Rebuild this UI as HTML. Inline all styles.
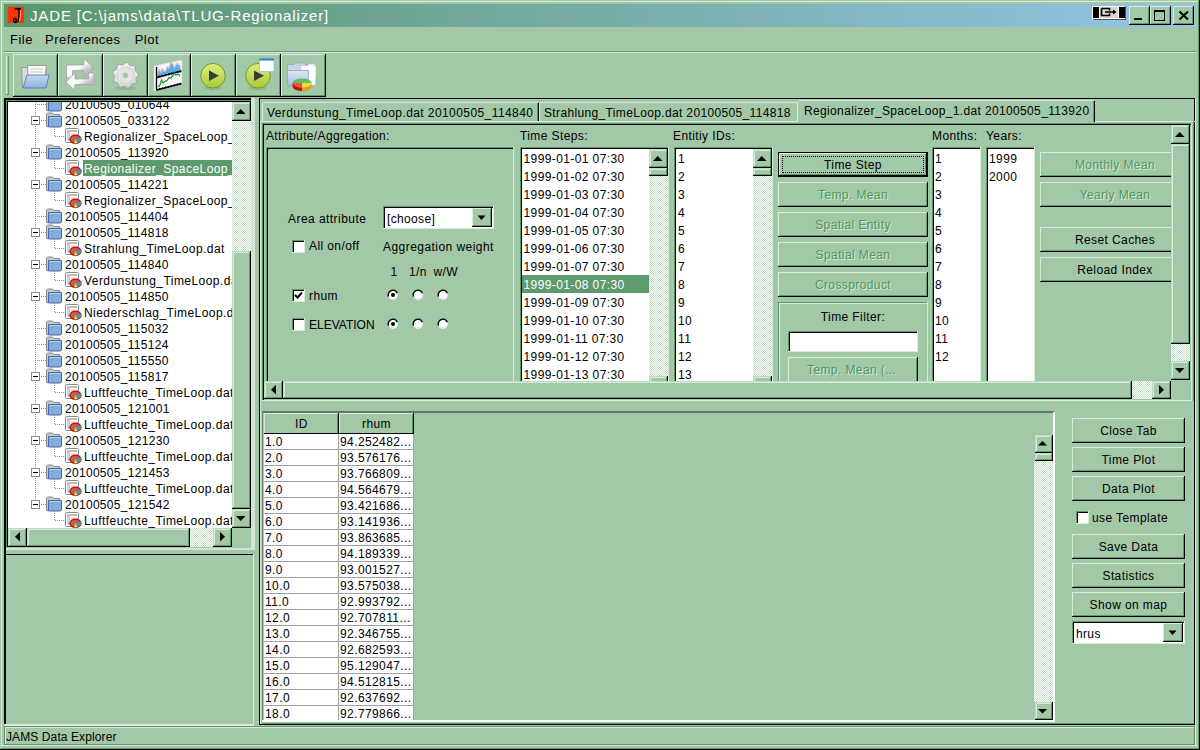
<!DOCTYPE html>
<html><head><meta charset="utf-8">
<style>
*{box-sizing:border-box;margin:0;padding:0}
html,body{width:1200px;height:750px;overflow:hidden;background:#a3c8a7}
body{position:relative;font-family:"Liberation Sans",sans-serif;font-size:12px;color:#000}
.a{position:absolute}
.t{position:absolute;white-space:nowrap}
svg{position:absolute;overflow:visible}
</style></head><body>
<div class="a" style="left:1px;top:1px;width:1197px;height:1px;background:#d6edd8;"></div>
<div class="a" style="left:1px;top:1px;width:1px;height:746px;background:#d6edd8;"></div>
<div class="a" style="left:1px;top:745px;width:1197px;height:1px;background:#d6edd8;"></div>
<div class="a" style="left:1199px;top:0px;width:1px;height:750px;background:#000;"></div>
<div class="a" style="left:0px;top:749px;width:1200px;height:1px;background:#000;"></div>
<div class="a" style="left:1198px;top:1px;width:1px;height:748px;background:#5e9a6e;"></div>
<div class="a" style="left:1px;top:748px;width:1198px;height:1px;background:#5e9a6e;"></div>
<div class="a" style="left:1px;top:1px;width:1197px;height:1px;background:#d6edd8;"></div>
<div class="a" style="left:4px;top:4px;width:1192px;height:23px;background:linear-gradient(90deg,#5a966a 0%,#94c4e6 100%);"></div>
<div class="a" style="left:8px;top:7px;width:16px;height:16px;background:#ff3300;"></div>
<svg style="left:8px;top:7px" width="16" height="16"><path d="M6.5 1.8h6.5" stroke="#000" stroke-width="1.8"/><path d="M11 2C11.2 7 11.3 11.5 10 14 C9 15.8 6.5 15.8 5.6 14.2 C4.8 12.6 6 11 7.6 11.6 C8.8 12.2 8.4 14 7.2 13.8" stroke="#000" stroke-width="1.5" fill="none"/><path d="M12.3 3C12.5 8 12.3 12 11.3 14.5" stroke="#ffd0c0" stroke-width="0.8" fill="none"/></svg>
<div class="t" style="left:30px;top:7.80px;font-size:15px;letter-spacing:0.85px;color:#fff;line-height:16px;">JADE [C:\jams\data\TLUG-Regionalizer]</div>
<div class="a" style="left:1092px;top:6px;width:34px;height:14px;background:#fff;"></div>
<div class="a" style="left:1093px;top:7px;width:6px;height:11px;background:#000;"></div>
<div class="a" style="left:1119px;top:7px;width:6px;height:11px;background:#000;"></div>
<div class="a" style="left:1100px;top:7px;width:18px;height:11px;background:#d8d4d0;"></div>
<div class="a" style="left:1093px;top:19px;width:33px;height:1px;background:#5a5050;"></div>
<div class="a" style="left:1125px;top:6px;width:1px;height:14px;background:#5a5050;"></div>
<svg style="left:1100px;top:7px" width="18" height="11"><path d="M1.5 1.5h8v2M1.5 1.5v7h8v-2M5 5h9" stroke="#000" stroke-width="1.6" fill="none"/><path d="M13 2.5l3.5 2.5-3.5 2.5z" fill="#000"/></svg>
<div class="a" style="left:1129px;top:6px;width:21px;height:19px;background:#a3c8a7;"></div>
<div class="a" style="left:1129px;top:6px;width:21px;height:1px;background:#d6edd8;"></div>
<div class="a" style="left:1129px;top:6px;width:1px;height:19px;background:#d6edd8;"></div>
<div class="a" style="left:1129px;top:24px;width:21px;height:1px;background:#000;"></div>
<div class="a" style="left:1149px;top:6px;width:1px;height:19px;background:#000;"></div>
<div class="a" style="left:1130px;top:23px;width:19px;height:1px;background:#5e9a6e;"></div>
<div class="a" style="left:1148px;top:7px;width:1px;height:17px;background:#5e9a6e;"></div>
<div class="a" style="left:1150px;top:6px;width:21px;height:19px;background:#a3c8a7;"></div>
<div class="a" style="left:1150px;top:6px;width:21px;height:1px;background:#d6edd8;"></div>
<div class="a" style="left:1150px;top:6px;width:1px;height:19px;background:#d6edd8;"></div>
<div class="a" style="left:1150px;top:24px;width:21px;height:1px;background:#000;"></div>
<div class="a" style="left:1170px;top:6px;width:1px;height:19px;background:#000;"></div>
<div class="a" style="left:1151px;top:23px;width:19px;height:1px;background:#5e9a6e;"></div>
<div class="a" style="left:1169px;top:7px;width:1px;height:17px;background:#5e9a6e;"></div>
<div class="a" style="left:1173px;top:6px;width:21px;height:19px;background:#a3c8a7;"></div>
<div class="a" style="left:1173px;top:6px;width:21px;height:1px;background:#d6edd8;"></div>
<div class="a" style="left:1173px;top:6px;width:1px;height:19px;background:#d6edd8;"></div>
<div class="a" style="left:1173px;top:24px;width:21px;height:1px;background:#000;"></div>
<div class="a" style="left:1193px;top:6px;width:1px;height:19px;background:#000;"></div>
<div class="a" style="left:1174px;top:23px;width:19px;height:1px;background:#5e9a6e;"></div>
<div class="a" style="left:1192px;top:7px;width:1px;height:17px;background:#5e9a6e;"></div>
<div class="a" style="left:1134px;top:18px;width:8px;height:2px;background:#000;"></div>
<div class="a" style="left:1154px;top:10px;width:11px;height:11px;border:1px solid #000;border-top-width:2px"></div>
<svg style="left:1178px;top:10px" width="12" height="11"><path d="M1.5 1.5l8.5 8M10 1.5l-8.5 8" stroke="#000" stroke-width="2" fill="none"/></svg>
<div class="t" style="left:10px;top:31.50px;font-size:13px;letter-spacing:0.5px;color:#000;line-height:16px;">File</div>
<div class="t" style="left:45px;top:31.50px;font-size:13px;letter-spacing:0.5px;color:#000;line-height:16px;">Preferences</div>
<div class="t" style="left:134.7px;top:31.50px;font-size:13px;letter-spacing:0.5px;color:#000;line-height:16px;">Plot</div>
<div class="a" style="left:4px;top:51px;width:1192px;height:1px;background:#5e9a6e;"></div>
<div class="a" style="left:4px;top:52px;width:1192px;height:1px;background:#d6edd8;"></div>
<div class="a" style="left:6px;top:56px;width:1px;height:39px;background:#d6edd8;"></div>
<div class="a" style="left:8px;top:56px;width:1px;height:39px;background:#5e9a6e;"></div>
<div class="a" style="left:6px;top:94px;width:3px;height:1px;background:#5e9a6e;"></div>
<div class="a" style="left:13px;top:54px;width:45px;height:43px;background:#a3c8a7;"></div>
<div class="a" style="left:13px;top:54px;width:45px;height:1px;background:#d6edd8;"></div>
<div class="a" style="left:13px;top:54px;width:1px;height:42px;background:#d6edd8;"></div>
<div class="a" style="left:13px;top:96px;width:45px;height:1px;background:#000;"></div>
<div class="a" style="left:57px;top:54px;width:1px;height:43px;background:#000;"></div>
<div class="a" style="left:14px;top:95px;width:43px;height:1px;background:#5e9a6e;"></div>
<div class="a" style="left:56px;top:55px;width:1px;height:41px;background:#5e9a6e;"></div>
<div class="a" style="left:58px;top:54px;width:45px;height:43px;background:#a3c8a7;"></div>
<div class="a" style="left:58px;top:54px;width:45px;height:1px;background:#d6edd8;"></div>
<div class="a" style="left:58px;top:54px;width:1px;height:42px;background:#d6edd8;"></div>
<div class="a" style="left:58px;top:96px;width:45px;height:1px;background:#000;"></div>
<div class="a" style="left:102px;top:54px;width:1px;height:43px;background:#000;"></div>
<div class="a" style="left:59px;top:95px;width:43px;height:1px;background:#5e9a6e;"></div>
<div class="a" style="left:101px;top:55px;width:1px;height:41px;background:#5e9a6e;"></div>
<div class="a" style="left:103px;top:54px;width:45px;height:43px;background:#a3c8a7;"></div>
<div class="a" style="left:103px;top:54px;width:45px;height:1px;background:#d6edd8;"></div>
<div class="a" style="left:103px;top:54px;width:1px;height:42px;background:#d6edd8;"></div>
<div class="a" style="left:103px;top:96px;width:45px;height:1px;background:#000;"></div>
<div class="a" style="left:147px;top:54px;width:1px;height:43px;background:#000;"></div>
<div class="a" style="left:104px;top:95px;width:43px;height:1px;background:#5e9a6e;"></div>
<div class="a" style="left:146px;top:55px;width:1px;height:41px;background:#5e9a6e;"></div>
<div class="a" style="left:148px;top:54px;width:43px;height:43px;background:#a3c8a7;"></div>
<div class="a" style="left:148px;top:54px;width:43px;height:1px;background:#d6edd8;"></div>
<div class="a" style="left:148px;top:54px;width:1px;height:42px;background:#d6edd8;"></div>
<div class="a" style="left:148px;top:96px;width:43px;height:1px;background:#000;"></div>
<div class="a" style="left:190px;top:54px;width:1px;height:43px;background:#000;"></div>
<div class="a" style="left:149px;top:95px;width:41px;height:1px;background:#5e9a6e;"></div>
<div class="a" style="left:189px;top:55px;width:1px;height:41px;background:#5e9a6e;"></div>
<div class="a" style="left:191px;top:54px;width:45px;height:43px;background:#a3c8a7;"></div>
<div class="a" style="left:191px;top:54px;width:45px;height:1px;background:#d6edd8;"></div>
<div class="a" style="left:191px;top:54px;width:1px;height:42px;background:#d6edd8;"></div>
<div class="a" style="left:191px;top:96px;width:45px;height:1px;background:#000;"></div>
<div class="a" style="left:235px;top:54px;width:1px;height:43px;background:#000;"></div>
<div class="a" style="left:192px;top:95px;width:43px;height:1px;background:#5e9a6e;"></div>
<div class="a" style="left:234px;top:55px;width:1px;height:41px;background:#5e9a6e;"></div>
<div class="a" style="left:236px;top:54px;width:45px;height:43px;background:#a3c8a7;"></div>
<div class="a" style="left:236px;top:54px;width:45px;height:1px;background:#d6edd8;"></div>
<div class="a" style="left:236px;top:54px;width:1px;height:42px;background:#d6edd8;"></div>
<div class="a" style="left:236px;top:96px;width:45px;height:1px;background:#000;"></div>
<div class="a" style="left:280px;top:54px;width:1px;height:43px;background:#000;"></div>
<div class="a" style="left:237px;top:95px;width:43px;height:1px;background:#5e9a6e;"></div>
<div class="a" style="left:279px;top:55px;width:1px;height:41px;background:#5e9a6e;"></div>
<div class="a" style="left:281px;top:54px;width:45px;height:43px;background:#a3c8a7;"></div>
<div class="a" style="left:281px;top:54px;width:45px;height:1px;background:#d6edd8;"></div>
<div class="a" style="left:281px;top:54px;width:1px;height:42px;background:#d6edd8;"></div>
<div class="a" style="left:281px;top:96px;width:45px;height:1px;background:#000;"></div>
<div class="a" style="left:325px;top:54px;width:1px;height:43px;background:#000;"></div>
<div class="a" style="left:282px;top:95px;width:43px;height:1px;background:#5e9a6e;"></div>
<div class="a" style="left:324px;top:55px;width:1px;height:41px;background:#5e9a6e;"></div>
<svg style="left:0;top:0" width="1" height="1"><defs>
<linearGradient id="gBlue" x1="0" y1="0" x2="0" y2="1"><stop offset="0" stop-color="#c6daf0"/><stop offset="1" stop-color="#8fb2dc"/></linearGradient>
<linearGradient id="gGray" x1="0" y1="0" x2="1" y2="1"><stop offset="0" stop-color="#f4f4f4"/><stop offset="0.5" stop-color="#bdbdbd"/><stop offset="1" stop-color="#e6e6e6"/></linearGradient>
<radialGradient id="gGear" cx="0.45" cy="0.35" r="0.7"><stop offset="0" stop-color="#fcfcfc"/><stop offset="0.7" stop-color="#e2e2e2"/><stop offset="1" stop-color="#c8c8c8"/></radialGradient>
<linearGradient id="gPlay" x1="0" y1="0" x2="0" y2="1"><stop offset="0" stop-color="#e0ec78"/><stop offset="1" stop-color="#a8cc3c"/></linearGradient>
<linearGradient id="gFold2" x1="0" y1="0" x2="0" y2="1"><stop offset="0" stop-color="#dfe8f4"/><stop offset="1" stop-color="#a9bfdc"/></linearGradient>
</defs></svg>
<svg style="left:13px;top:54px" width="45" height="43">
<path d="M8.5 13.5h6l1 -1h0v20l-6 1z" fill="#d8d8d8" stroke="#9a9a9a" stroke-width="1"/>
<path d="M14.5 11.5h19l-1.5 10h-17z" fill="#fafafa" stroke="#9a9a9a" stroke-width="1"/>
<path d="M17 15h13M17 18h13" stroke="#c8c8c8" stroke-width="1"/>
<path d="M14 21h22l-3 13h-23z" fill="url(#gBlue)" stroke="#5c86c0" stroke-width="1"/>
</svg>
<svg style="left:58px;top:54px" width="45" height="43">
<defs><linearGradient id="gMet" x1="0" y1="0" x2="1" y2="1"><stop offset="0" stop-color="#f0f0f0"/><stop offset="0.45" stop-color="#fdfdfd"/><stop offset="0.7" stop-color="#bcbcbc"/><stop offset="1" stop-color="#e0e0e0"/></linearGradient></defs>
<path d="M8.5 24V11H26V5L36 14 26 23V16.5H14.5V24Z" fill="url(#gMet)" stroke="#a0a0a0" stroke-width="0.7"/>
<path d="M36 19V30.5H17V37L8 28 17 19V25H30.5V19Z" fill="url(#gMet)" stroke="#a0a0a0" stroke-width="0.7"/>
</svg>
<svg style="left:103px;top:54px" width="45" height="43">
<ellipse cx="22.5" cy="34" rx="11" ry="2" fill="#7da886" opacity="0.6"/>
<polygon points="22.50,8.40 24.76,8.60 26.26,11.06 28.00,11.87 30.86,11.44 32.46,13.04 32.03,15.90 32.84,17.64 35.30,19.14 35.50,21.40 33.33,23.31 32.84,25.16 33.76,27.90 32.46,29.76 29.57,29.83 28.00,30.93 26.95,33.62 24.76,34.20 22.50,32.40 20.59,32.23 18.05,33.62 16.00,32.66 15.43,29.83 14.07,28.47 11.24,27.90 10.28,25.85 11.67,23.31 11.50,21.40 9.70,19.14 10.28,16.95 12.97,15.90 14.07,14.33 14.14,11.44 16.00,10.14 18.74,11.06 20.59,10.57" fill="url(#gGear)" stroke="#9c9c9c" stroke-width="0.8" stroke-linejoin="round"/>
<circle cx="22.5" cy="21.4" r="8.5" fill="#e4e4e4" stroke="#c8c8c8" stroke-width="0.8"/>
<circle cx="22.5" cy="21.4" r="2.6" fill="#a3c8a7"/>
</svg>
<svg style="left:148px;top:54px" width="43" height="43">
<path d="M6 12l28-6v24l-28 7z" fill="#f6f6f6" stroke="#d8d8d8" stroke-width="0.6"/>
<path d="M9 22l2-6 2 3 1.5-4 1.5 3 2-1 1.5-4 1.5 2 2-6 2 2 1.5 4 2-5 2.5 1 1.5 4v3l-23 5z" fill="#5aaee6"/>
<path d="M9 21l2-6 2 3 1.5-4 1.5 3 2-1 1.5-4 1.5 2 2-6 2 2 1.5 4 2-5 2.5 1 1.5 4" fill="none" stroke="#f4a0a0" stroke-width="0.8"/>
<path d="M8.5 13v23M8.5 36l25-6.5M8.5 23.5l25-6.5" stroke="#000" stroke-width="1.3" fill="none"/>
<path d="M8.5 36l25-6.5M8.5 23.5l25-6.5" stroke="#000" stroke-width="2.2" stroke-dasharray="1 2" fill="none"/>
<path d="M10.5 33l1.5-2 1.5-5 1.5 3 2-1.5 2-1 2-3 2 0.5 1.5-2 2-3 1.5 2 2-1 2 2" fill="none" stroke="#1c9c3c" stroke-width="1.3"/>
</svg>
<svg style="left:191px;top:54px" width="45" height="43">
<ellipse cx="22" cy="34" rx="9" ry="2" fill="#7da886" opacity="0.6"/>
<circle cx="22" cy="21.75" r="12.3" fill="url(#gPlay)" stroke="#6aa01c" stroke-width="1"/>
<path d="M18 16.5l10 5.25-10 5.25z" fill="#3a3a3a"/></svg>
<svg style="left:236px;top:54px" width="45" height="43">
<ellipse cx="22" cy="34" rx="9" ry="2" fill="#7da886" opacity="0.6"/>
<circle cx="22" cy="21.75" r="12.3" fill="url(#gPlay)" stroke="#6aa01c" stroke-width="1"/>
<path d="M18 16.5l10 5.25-10 5.25z" fill="#3a3a3a"/><rect x="23.5" y="5" width="14.5" height="12.5" fill="#fff" stroke="#a9c4e0" stroke-width="1"/><rect x="23.5" y="4.5" width="14.5" height="2" fill="#2a7cd0"/></svg>
<svg style="left:281px;top:54px" width="45" height="43">
<path d="M6.5 31v-19l1-1.5h6l1.5-1.5h8l1 1.5h8.5l-1 20.5z" fill="#c9d6e8" stroke="#8ea4c4" stroke-width="0.8"/>
<path d="M19.5 11.5h7l1-1.5h6l1 2v18l-15 1z" fill="#f2f4f8" stroke="#b0bed2" stroke-width="0.6"/>
<path d="M27 13h8l-1 18h-8z" fill="#ffffff"/>
<path d="M6.5 16.5h21v15h-21z" fill="url(#gFold2)" stroke="#8ea4c4" stroke-width="0.8"/>
<ellipse cx="22" cy="36" rx="6" ry="1.5" fill="#7da886" opacity="0.5"/>
<path d="M11.5 29v3.5a9.5 4.5 0 0 0 9.5 4.5v-3.5z" fill="#c81010"/>
<path d="M21 33.5v3.5a9.5 4.5 0 0 0 9.5-4.5v-3.5z" fill="#e0a010"/>
<path d="M11.5 29a9.5 4.5 0 0 1 19 0z" fill="#58c058"/>
<path d="M11.5 29a9.5 4.5 0 0 0 9.5 4.5v-4.5z" fill="#f05050"/>
<path d="M21 33.5a9.5 4.5 0 0 0 9.5-4.5h-9.5z" fill="#f4d840"/>
</svg>
<div class="a" style="left:4px;top:98px;width:250px;height:2px;background:#000;"></div>
<div class="a" style="left:4px;top:98px;width:2px;height:450px;background:#000;"></div>
<div class="a" style="left:6px;top:100px;width:246px;height:1px;background:#5e9a6e;"></div>
<div class="a" style="left:6px;top:100px;width:1px;height:448px;background:#5e9a6e;"></div>
<div class="a" style="left:7px;top:101px;width:244px;height:1px;background:#000;"></div>
<div class="a" style="left:7px;top:101px;width:1px;height:446px;background:#000;"></div>
<div class="a" style="left:251px;top:98px;width:4px;height:451px;background:#d2e4d6;"></div>
<div class="a" style="left:6px;top:548px;width:249px;height:2px;background:#d2e4d6;"></div>
<div class="a" style="left:4px;top:98px;width:2px;height:627px;background:#000;"></div>
<div class="a" style="left:8px;top:102px;width:224px;height:426px;background:#fff;"></div>
<div class="a" style="left:232px;top:102px;width:19px;height:426px;background:repeating-conic-gradient(#ffffff 0% 25%, #c4dec8 0% 50%) 0 0/2px 2px;"></div>
<div class="a" style="left:232px;top:102px;width:19px;height:19px;background:#a3c8a7;"></div>
<div class="a" style="left:232px;top:102px;width:19px;height:1px;background:#bcd9c0;"></div>
<div class="a" style="left:232px;top:102px;width:1px;height:19px;background:#bcd9c0;"></div>
<div class="a" style="left:233px;top:103px;width:16px;height:1px;background:#d6edd8;"></div>
<div class="a" style="left:233px;top:103px;width:1px;height:16px;background:#d6edd8;"></div>
<div class="a" style="left:232px;top:120px;width:19px;height:1px;background:#000;"></div>
<div class="a" style="left:250px;top:102px;width:1px;height:19px;background:#000;"></div>
<div class="a" style="left:233px;top:119px;width:17px;height:1px;background:#5e9a6e;"></div>
<div class="a" style="left:249px;top:103px;width:1px;height:17px;background:#5e9a6e;"></div>
<svg style="left:232px;top:102px" width="19" height="19"><path d="M4 12h9.5l-4.75-5z" fill="#000"/></svg>
<div class="a" style="left:232px;top:509px;width:19px;height:19px;background:#a3c8a7;"></div>
<div class="a" style="left:232px;top:509px;width:19px;height:1px;background:#bcd9c0;"></div>
<div class="a" style="left:232px;top:509px;width:1px;height:19px;background:#bcd9c0;"></div>
<div class="a" style="left:233px;top:510px;width:16px;height:1px;background:#d6edd8;"></div>
<div class="a" style="left:233px;top:510px;width:1px;height:16px;background:#d6edd8;"></div>
<div class="a" style="left:232px;top:527px;width:19px;height:1px;background:#000;"></div>
<div class="a" style="left:250px;top:509px;width:1px;height:19px;background:#000;"></div>
<div class="a" style="left:233px;top:526px;width:17px;height:1px;background:#5e9a6e;"></div>
<div class="a" style="left:249px;top:510px;width:1px;height:17px;background:#5e9a6e;"></div>
<svg style="left:232px;top:509px" width="19" height="19"><path d="M4 7h9.5l-4.75 5z" fill="#000"/></svg>
<div class="a" style="left:232px;top:251px;width:19px;height:258px;background:#a3c8a7;"></div>
<div class="a" style="left:232px;top:251px;width:19px;height:1px;background:#bcd9c0;"></div>
<div class="a" style="left:232px;top:251px;width:1px;height:258px;background:#bcd9c0;"></div>
<div class="a" style="left:233px;top:252px;width:16px;height:1px;background:#d6edd8;"></div>
<div class="a" style="left:233px;top:252px;width:1px;height:255px;background:#d6edd8;"></div>
<div class="a" style="left:232px;top:508px;width:19px;height:1px;background:#000;"></div>
<div class="a" style="left:250px;top:251px;width:1px;height:258px;background:#000;"></div>
<div class="a" style="left:233px;top:507px;width:17px;height:1px;background:#5e9a6e;"></div>
<div class="a" style="left:249px;top:252px;width:1px;height:256px;background:#5e9a6e;"></div>
<div class="a" style="left:8px;top:528px;width:224px;height:19px;background:repeating-conic-gradient(#ffffff 0% 25%, #c4dec8 0% 50%) 0 0/2px 2px;"></div>
<div class="a" style="left:8px;top:528px;width:19px;height:19px;background:#a3c8a7;"></div>
<div class="a" style="left:8px;top:528px;width:19px;height:1px;background:#bcd9c0;"></div>
<div class="a" style="left:8px;top:528px;width:1px;height:19px;background:#bcd9c0;"></div>
<div class="a" style="left:9px;top:529px;width:16px;height:1px;background:#d6edd8;"></div>
<div class="a" style="left:9px;top:529px;width:1px;height:16px;background:#d6edd8;"></div>
<div class="a" style="left:8px;top:546px;width:19px;height:1px;background:#000;"></div>
<div class="a" style="left:26px;top:528px;width:1px;height:19px;background:#000;"></div>
<div class="a" style="left:9px;top:545px;width:17px;height:1px;background:#5e9a6e;"></div>
<div class="a" style="left:25px;top:529px;width:1px;height:17px;background:#5e9a6e;"></div>
<svg style="left:8px;top:528px" width="19" height="19"><path d="M12 4v9.5l-5-4.75z" fill="#000"/></svg>
<div class="a" style="left:213px;top:528px;width:19px;height:19px;background:#a3c8a7;"></div>
<div class="a" style="left:213px;top:528px;width:19px;height:1px;background:#bcd9c0;"></div>
<div class="a" style="left:213px;top:528px;width:1px;height:19px;background:#bcd9c0;"></div>
<div class="a" style="left:214px;top:529px;width:16px;height:1px;background:#d6edd8;"></div>
<div class="a" style="left:214px;top:529px;width:1px;height:16px;background:#d6edd8;"></div>
<div class="a" style="left:213px;top:546px;width:19px;height:1px;background:#000;"></div>
<div class="a" style="left:231px;top:528px;width:1px;height:19px;background:#000;"></div>
<div class="a" style="left:214px;top:545px;width:17px;height:1px;background:#5e9a6e;"></div>
<div class="a" style="left:230px;top:529px;width:1px;height:17px;background:#5e9a6e;"></div>
<svg style="left:213px;top:528px" width="19" height="19"><path d="M7 4v9.5l5-4.75z" fill="#000"/></svg>
<div class="a" style="left:27px;top:528px;width:163px;height:19px;background:#a3c8a7;"></div>
<div class="a" style="left:27px;top:528px;width:163px;height:1px;background:#bcd9c0;"></div>
<div class="a" style="left:27px;top:528px;width:1px;height:19px;background:#bcd9c0;"></div>
<div class="a" style="left:28px;top:529px;width:160px;height:1px;background:#d6edd8;"></div>
<div class="a" style="left:28px;top:529px;width:1px;height:16px;background:#d6edd8;"></div>
<div class="a" style="left:27px;top:546px;width:163px;height:1px;background:#000;"></div>
<div class="a" style="left:189px;top:528px;width:1px;height:19px;background:#000;"></div>
<div class="a" style="left:28px;top:545px;width:161px;height:1px;background:#5e9a6e;"></div>
<div class="a" style="left:188px;top:529px;width:1px;height:17px;background:#5e9a6e;"></div>
<div class="a" style="left:232px;top:528px;width:19px;height:19px;background:#a3c8a7;"></div>
<div class="a" style="left:8px;top:102px;width:224px;height:426px;overflow:hidden"><div class="a" style="left:-8px;top:-102px;width:240px;height:700px"><div class="a" style="left:35px;top:96px;width:1px;height:408px;background:repeating-linear-gradient(180deg,#909090 0 1px,transparent 1px 2px)"></div>
<div class="a" style="left:37px;top:104px;width:9px;height:1px;background:repeating-linear-gradient(90deg,#909090 0 1px,transparent 1px 2px)"></div>
<svg style="left:46px;top:96px" width="17" height="16"><path d="M0.5 14.5v-12.5l1-1h5l1.5 1.5h5.5v12z" fill="#c8c8c8" stroke="#8a8a8a" stroke-width="1"/><path d="M2.5 4.5h13v9.5l-1 1h-12z" fill="#86acdc" stroke="#3c6cb4" stroke-width="1"/><path d="M3.5 5.5h11" stroke="#b8d0f0" stroke-width="1"/></svg>
<div class="t" style="left:65px;top:97px;font-size:12px;letter-spacing:0.3px;line-height:16px">20100505_010644</div>
<div class="a" style="left:31px;top:116px;width:9px;height:9px;background:#fff;border:1px solid #8a8a8a"></div>
<div class="a" style="left:33px;top:120px;width:5px;height:1px;background:#000"></div>
<div class="a" style="left:41px;top:120px;width:5px;height:1px;background:repeating-linear-gradient(90deg,#909090 0 1px,transparent 1px 2px)"></div>
<svg style="left:46px;top:112px" width="17" height="16"><path d="M0.5 14.5v-12.5l1-1h5l1.5 1.5h5.5v12z" fill="#c8c8c8" stroke="#8a8a8a" stroke-width="1"/><path d="M2.5 4.5h13v9.5l-1 1h-12z" fill="#86acdc" stroke="#3c6cb4" stroke-width="1"/><path d="M3.5 5.5h11" stroke="#b8d0f0" stroke-width="1"/></svg>
<div class="t" style="left:65px;top:113px;font-size:12px;letter-spacing:0.3px;line-height:16px">20100505_033122</div>
<div class="a" style="left:54px;top:127px;width:1px;height:9px;background:repeating-linear-gradient(180deg,#909090 0 1px,transparent 1px 2px)"></div>
<div class="a" style="left:55px;top:136px;width:10px;height:1px;background:repeating-linear-gradient(90deg,#909090 0 1px,transparent 1px 2px)"></div>
<svg style="left:65px;top:128px" width="18" height="17"><rect x="0.5" y="0.5" width="13" height="14" rx="1" fill="#fafafa" stroke="#8c8c8c"/><rect x="2" y="2" width="10" height="2" fill="#c0c0c0"/><rect x="2" y="4" width="3" height="9" fill="#cfcfcf"/><path d="M2 6.5h10M2 9h10M8.5 4v8" stroke="#d4dde4" stroke-width="1"/><ellipse cx="10.5" cy="11.3" rx="5.6" ry="4.1" fill="#d0583c" stroke="#c00c0c" stroke-width="1.2"/><path d="M10.5 11.3L15.6 9.6A5.6 4.1 0 0 1 12.6 15Z" fill="#2a9cd0"/><path d="M10.5 11.3L12.6 15A5.6 4.1 0 0 1 9 15.3Z" fill="#d8e060"/></svg>
<div class="t" style="left:84px;top:129px;font-size:12px;letter-spacing:0.45px;line-height:16px;color:#000">Regionalizer_SpaceLoop_</div>
<div class="a" style="left:31px;top:148px;width:9px;height:9px;background:#fff;border:1px solid #8a8a8a"></div>
<div class="a" style="left:33px;top:152px;width:5px;height:1px;background:#000"></div>
<div class="a" style="left:41px;top:152px;width:5px;height:1px;background:repeating-linear-gradient(90deg,#909090 0 1px,transparent 1px 2px)"></div>
<svg style="left:46px;top:144px" width="17" height="16"><path d="M0.5 14.5v-12.5l1-1h5l1.5 1.5h5.5v12z" fill="#c8c8c8" stroke="#8a8a8a" stroke-width="1"/><path d="M2.5 4.5h13v9.5l-1 1h-12z" fill="#86acdc" stroke="#3c6cb4" stroke-width="1"/><path d="M3.5 5.5h11" stroke="#b8d0f0" stroke-width="1"/></svg>
<div class="t" style="left:65px;top:145px;font-size:12px;letter-spacing:0.3px;line-height:16px">20100505_113920</div>
<div class="a" style="left:54px;top:159px;width:1px;height:9px;background:repeating-linear-gradient(180deg,#909090 0 1px,transparent 1px 2px)"></div>
<div class="a" style="left:55px;top:168px;width:10px;height:1px;background:repeating-linear-gradient(90deg,#909090 0 1px,transparent 1px 2px)"></div>
<svg style="left:65px;top:160px" width="18" height="17"><rect x="0.5" y="0.5" width="13" height="14" rx="1" fill="#fafafa" stroke="#8c8c8c"/><rect x="2" y="2" width="10" height="2" fill="#c0c0c0"/><rect x="2" y="4" width="3" height="9" fill="#cfcfcf"/><path d="M2 6.5h10M2 9h10M8.5 4v8" stroke="#d4dde4" stroke-width="1"/><ellipse cx="10.5" cy="11.3" rx="5.6" ry="4.1" fill="#d0583c" stroke="#c00c0c" stroke-width="1.2"/><path d="M10.5 11.3L15.6 9.6A5.6 4.1 0 0 1 12.6 15Z" fill="#2a9cd0"/><path d="M10.5 11.3L12.6 15A5.6 4.1 0 0 1 9 15.3Z" fill="#d8e060"/></svg>
<div class="a" style="left:83px;top:160px;width:149px;height:16px;background:#5e9a6e"></div>
<div class="t" style="left:84px;top:161px;font-size:12px;letter-spacing:0.45px;line-height:16px;color:#fff">Regionalizer_SpaceLoop_</div>
<div class="a" style="left:31px;top:180px;width:9px;height:9px;background:#fff;border:1px solid #8a8a8a"></div>
<div class="a" style="left:33px;top:184px;width:5px;height:1px;background:#000"></div>
<div class="a" style="left:41px;top:184px;width:5px;height:1px;background:repeating-linear-gradient(90deg,#909090 0 1px,transparent 1px 2px)"></div>
<svg style="left:46px;top:176px" width="17" height="16"><path d="M0.5 14.5v-12.5l1-1h5l1.5 1.5h5.5v12z" fill="#c8c8c8" stroke="#8a8a8a" stroke-width="1"/><path d="M2.5 4.5h13v9.5l-1 1h-12z" fill="#86acdc" stroke="#3c6cb4" stroke-width="1"/><path d="M3.5 5.5h11" stroke="#b8d0f0" stroke-width="1"/></svg>
<div class="t" style="left:65px;top:177px;font-size:12px;letter-spacing:0.3px;line-height:16px">20100505_114221</div>
<div class="a" style="left:54px;top:191px;width:1px;height:9px;background:repeating-linear-gradient(180deg,#909090 0 1px,transparent 1px 2px)"></div>
<div class="a" style="left:55px;top:200px;width:10px;height:1px;background:repeating-linear-gradient(90deg,#909090 0 1px,transparent 1px 2px)"></div>
<svg style="left:65px;top:192px" width="18" height="17"><rect x="0.5" y="0.5" width="13" height="14" rx="1" fill="#fafafa" stroke="#8c8c8c"/><rect x="2" y="2" width="10" height="2" fill="#c0c0c0"/><rect x="2" y="4" width="3" height="9" fill="#cfcfcf"/><path d="M2 6.5h10M2 9h10M8.5 4v8" stroke="#d4dde4" stroke-width="1"/><ellipse cx="10.5" cy="11.3" rx="5.6" ry="4.1" fill="#d0583c" stroke="#c00c0c" stroke-width="1.2"/><path d="M10.5 11.3L15.6 9.6A5.6 4.1 0 0 1 12.6 15Z" fill="#2a9cd0"/><path d="M10.5 11.3L12.6 15A5.6 4.1 0 0 1 9 15.3Z" fill="#d8e060"/></svg>
<div class="t" style="left:84px;top:193px;font-size:12px;letter-spacing:0.45px;line-height:16px;color:#000">Regionalizer_SpaceLoop_</div>
<div class="a" style="left:37px;top:216px;width:9px;height:1px;background:repeating-linear-gradient(90deg,#909090 0 1px,transparent 1px 2px)"></div>
<svg style="left:46px;top:208px" width="17" height="16"><path d="M0.5 14.5v-12.5l1-1h5l1.5 1.5h5.5v12z" fill="#c8c8c8" stroke="#8a8a8a" stroke-width="1"/><path d="M2.5 4.5h13v9.5l-1 1h-12z" fill="#86acdc" stroke="#3c6cb4" stroke-width="1"/><path d="M3.5 5.5h11" stroke="#b8d0f0" stroke-width="1"/></svg>
<div class="t" style="left:65px;top:209px;font-size:12px;letter-spacing:0.3px;line-height:16px">20100505_114404</div>
<div class="a" style="left:31px;top:228px;width:9px;height:9px;background:#fff;border:1px solid #8a8a8a"></div>
<div class="a" style="left:33px;top:232px;width:5px;height:1px;background:#000"></div>
<div class="a" style="left:41px;top:232px;width:5px;height:1px;background:repeating-linear-gradient(90deg,#909090 0 1px,transparent 1px 2px)"></div>
<svg style="left:46px;top:224px" width="17" height="16"><path d="M0.5 14.5v-12.5l1-1h5l1.5 1.5h5.5v12z" fill="#c8c8c8" stroke="#8a8a8a" stroke-width="1"/><path d="M2.5 4.5h13v9.5l-1 1h-12z" fill="#86acdc" stroke="#3c6cb4" stroke-width="1"/><path d="M3.5 5.5h11" stroke="#b8d0f0" stroke-width="1"/></svg>
<div class="t" style="left:65px;top:225px;font-size:12px;letter-spacing:0.3px;line-height:16px">20100505_114818</div>
<div class="a" style="left:54px;top:239px;width:1px;height:9px;background:repeating-linear-gradient(180deg,#909090 0 1px,transparent 1px 2px)"></div>
<div class="a" style="left:55px;top:248px;width:10px;height:1px;background:repeating-linear-gradient(90deg,#909090 0 1px,transparent 1px 2px)"></div>
<svg style="left:65px;top:240px" width="18" height="17"><rect x="0.5" y="0.5" width="13" height="14" rx="1" fill="#fafafa" stroke="#8c8c8c"/><rect x="2" y="2" width="10" height="2" fill="#c0c0c0"/><rect x="2" y="4" width="3" height="9" fill="#cfcfcf"/><path d="M2 6.5h10M2 9h10M8.5 4v8" stroke="#d4dde4" stroke-width="1"/><ellipse cx="10.5" cy="11.3" rx="5.6" ry="4.1" fill="#d0583c" stroke="#c00c0c" stroke-width="1.2"/><path d="M10.5 11.3L15.6 9.6A5.6 4.1 0 0 1 12.6 15Z" fill="#2a9cd0"/><path d="M10.5 11.3L12.6 15A5.6 4.1 0 0 1 9 15.3Z" fill="#d8e060"/></svg>
<div class="t" style="left:84px;top:241px;font-size:12px;letter-spacing:0.45px;line-height:16px;color:#000">Strahlung_TimeLoop.dat</div>
<div class="a" style="left:31px;top:260px;width:9px;height:9px;background:#fff;border:1px solid #8a8a8a"></div>
<div class="a" style="left:33px;top:264px;width:5px;height:1px;background:#000"></div>
<div class="a" style="left:41px;top:264px;width:5px;height:1px;background:repeating-linear-gradient(90deg,#909090 0 1px,transparent 1px 2px)"></div>
<svg style="left:46px;top:256px" width="17" height="16"><path d="M0.5 14.5v-12.5l1-1h5l1.5 1.5h5.5v12z" fill="#c8c8c8" stroke="#8a8a8a" stroke-width="1"/><path d="M2.5 4.5h13v9.5l-1 1h-12z" fill="#86acdc" stroke="#3c6cb4" stroke-width="1"/><path d="M3.5 5.5h11" stroke="#b8d0f0" stroke-width="1"/></svg>
<div class="t" style="left:65px;top:257px;font-size:12px;letter-spacing:0.3px;line-height:16px">20100505_114840</div>
<div class="a" style="left:54px;top:271px;width:1px;height:9px;background:repeating-linear-gradient(180deg,#909090 0 1px,transparent 1px 2px)"></div>
<div class="a" style="left:55px;top:280px;width:10px;height:1px;background:repeating-linear-gradient(90deg,#909090 0 1px,transparent 1px 2px)"></div>
<svg style="left:65px;top:272px" width="18" height="17"><rect x="0.5" y="0.5" width="13" height="14" rx="1" fill="#fafafa" stroke="#8c8c8c"/><rect x="2" y="2" width="10" height="2" fill="#c0c0c0"/><rect x="2" y="4" width="3" height="9" fill="#cfcfcf"/><path d="M2 6.5h10M2 9h10M8.5 4v8" stroke="#d4dde4" stroke-width="1"/><ellipse cx="10.5" cy="11.3" rx="5.6" ry="4.1" fill="#d0583c" stroke="#c00c0c" stroke-width="1.2"/><path d="M10.5 11.3L15.6 9.6A5.6 4.1 0 0 1 12.6 15Z" fill="#2a9cd0"/><path d="M10.5 11.3L12.6 15A5.6 4.1 0 0 1 9 15.3Z" fill="#d8e060"/></svg>
<div class="t" style="left:84px;top:273px;font-size:12px;letter-spacing:0.45px;line-height:16px;color:#000">Verdunstung_TimeLoop.dat</div>
<div class="a" style="left:31px;top:292px;width:9px;height:9px;background:#fff;border:1px solid #8a8a8a"></div>
<div class="a" style="left:33px;top:296px;width:5px;height:1px;background:#000"></div>
<div class="a" style="left:41px;top:296px;width:5px;height:1px;background:repeating-linear-gradient(90deg,#909090 0 1px,transparent 1px 2px)"></div>
<svg style="left:46px;top:288px" width="17" height="16"><path d="M0.5 14.5v-12.5l1-1h5l1.5 1.5h5.5v12z" fill="#c8c8c8" stroke="#8a8a8a" stroke-width="1"/><path d="M2.5 4.5h13v9.5l-1 1h-12z" fill="#86acdc" stroke="#3c6cb4" stroke-width="1"/><path d="M3.5 5.5h11" stroke="#b8d0f0" stroke-width="1"/></svg>
<div class="t" style="left:65px;top:289px;font-size:12px;letter-spacing:0.3px;line-height:16px">20100505_114850</div>
<div class="a" style="left:54px;top:303px;width:1px;height:9px;background:repeating-linear-gradient(180deg,#909090 0 1px,transparent 1px 2px)"></div>
<div class="a" style="left:55px;top:312px;width:10px;height:1px;background:repeating-linear-gradient(90deg,#909090 0 1px,transparent 1px 2px)"></div>
<svg style="left:65px;top:304px" width="18" height="17"><rect x="0.5" y="0.5" width="13" height="14" rx="1" fill="#fafafa" stroke="#8c8c8c"/><rect x="2" y="2" width="10" height="2" fill="#c0c0c0"/><rect x="2" y="4" width="3" height="9" fill="#cfcfcf"/><path d="M2 6.5h10M2 9h10M8.5 4v8" stroke="#d4dde4" stroke-width="1"/><ellipse cx="10.5" cy="11.3" rx="5.6" ry="4.1" fill="#d0583c" stroke="#c00c0c" stroke-width="1.2"/><path d="M10.5 11.3L15.6 9.6A5.6 4.1 0 0 1 12.6 15Z" fill="#2a9cd0"/><path d="M10.5 11.3L12.6 15A5.6 4.1 0 0 1 9 15.3Z" fill="#d8e060"/></svg>
<div class="t" style="left:84px;top:305px;font-size:12px;letter-spacing:0.45px;line-height:16px;color:#000">Niederschlag_TimeLoop.dat</div>
<div class="a" style="left:37px;top:328px;width:9px;height:1px;background:repeating-linear-gradient(90deg,#909090 0 1px,transparent 1px 2px)"></div>
<svg style="left:46px;top:320px" width="17" height="16"><path d="M0.5 14.5v-12.5l1-1h5l1.5 1.5h5.5v12z" fill="#c8c8c8" stroke="#8a8a8a" stroke-width="1"/><path d="M2.5 4.5h13v9.5l-1 1h-12z" fill="#86acdc" stroke="#3c6cb4" stroke-width="1"/><path d="M3.5 5.5h11" stroke="#b8d0f0" stroke-width="1"/></svg>
<div class="t" style="left:65px;top:321px;font-size:12px;letter-spacing:0.3px;line-height:16px">20100505_115032</div>
<div class="a" style="left:37px;top:344px;width:9px;height:1px;background:repeating-linear-gradient(90deg,#909090 0 1px,transparent 1px 2px)"></div>
<svg style="left:46px;top:336px" width="17" height="16"><path d="M0.5 14.5v-12.5l1-1h5l1.5 1.5h5.5v12z" fill="#c8c8c8" stroke="#8a8a8a" stroke-width="1"/><path d="M2.5 4.5h13v9.5l-1 1h-12z" fill="#86acdc" stroke="#3c6cb4" stroke-width="1"/><path d="M3.5 5.5h11" stroke="#b8d0f0" stroke-width="1"/></svg>
<div class="t" style="left:65px;top:337px;font-size:12px;letter-spacing:0.3px;line-height:16px">20100505_115124</div>
<div class="a" style="left:37px;top:360px;width:9px;height:1px;background:repeating-linear-gradient(90deg,#909090 0 1px,transparent 1px 2px)"></div>
<svg style="left:46px;top:352px" width="17" height="16"><path d="M0.5 14.5v-12.5l1-1h5l1.5 1.5h5.5v12z" fill="#c8c8c8" stroke="#8a8a8a" stroke-width="1"/><path d="M2.5 4.5h13v9.5l-1 1h-12z" fill="#86acdc" stroke="#3c6cb4" stroke-width="1"/><path d="M3.5 5.5h11" stroke="#b8d0f0" stroke-width="1"/></svg>
<div class="t" style="left:65px;top:353px;font-size:12px;letter-spacing:0.3px;line-height:16px">20100505_115550</div>
<div class="a" style="left:31px;top:372px;width:9px;height:9px;background:#fff;border:1px solid #8a8a8a"></div>
<div class="a" style="left:33px;top:376px;width:5px;height:1px;background:#000"></div>
<div class="a" style="left:41px;top:376px;width:5px;height:1px;background:repeating-linear-gradient(90deg,#909090 0 1px,transparent 1px 2px)"></div>
<svg style="left:46px;top:368px" width="17" height="16"><path d="M0.5 14.5v-12.5l1-1h5l1.5 1.5h5.5v12z" fill="#c8c8c8" stroke="#8a8a8a" stroke-width="1"/><path d="M2.5 4.5h13v9.5l-1 1h-12z" fill="#86acdc" stroke="#3c6cb4" stroke-width="1"/><path d="M3.5 5.5h11" stroke="#b8d0f0" stroke-width="1"/></svg>
<div class="t" style="left:65px;top:369px;font-size:12px;letter-spacing:0.3px;line-height:16px">20100505_115817</div>
<div class="a" style="left:54px;top:383px;width:1px;height:9px;background:repeating-linear-gradient(180deg,#909090 0 1px,transparent 1px 2px)"></div>
<div class="a" style="left:55px;top:392px;width:10px;height:1px;background:repeating-linear-gradient(90deg,#909090 0 1px,transparent 1px 2px)"></div>
<svg style="left:65px;top:384px" width="18" height="17"><rect x="0.5" y="0.5" width="13" height="14" rx="1" fill="#fafafa" stroke="#8c8c8c"/><rect x="2" y="2" width="10" height="2" fill="#c0c0c0"/><rect x="2" y="4" width="3" height="9" fill="#cfcfcf"/><path d="M2 6.5h10M2 9h10M8.5 4v8" stroke="#d4dde4" stroke-width="1"/><ellipse cx="10.5" cy="11.3" rx="5.6" ry="4.1" fill="#d0583c" stroke="#c00c0c" stroke-width="1.2"/><path d="M10.5 11.3L15.6 9.6A5.6 4.1 0 0 1 12.6 15Z" fill="#2a9cd0"/><path d="M10.5 11.3L12.6 15A5.6 4.1 0 0 1 9 15.3Z" fill="#d8e060"/></svg>
<div class="t" style="left:84px;top:385px;font-size:12px;letter-spacing:0.45px;line-height:16px;color:#000">Luftfeuchte_TimeLoop.dat</div>
<div class="a" style="left:31px;top:404px;width:9px;height:9px;background:#fff;border:1px solid #8a8a8a"></div>
<div class="a" style="left:33px;top:408px;width:5px;height:1px;background:#000"></div>
<div class="a" style="left:41px;top:408px;width:5px;height:1px;background:repeating-linear-gradient(90deg,#909090 0 1px,transparent 1px 2px)"></div>
<svg style="left:46px;top:400px" width="17" height="16"><path d="M0.5 14.5v-12.5l1-1h5l1.5 1.5h5.5v12z" fill="#c8c8c8" stroke="#8a8a8a" stroke-width="1"/><path d="M2.5 4.5h13v9.5l-1 1h-12z" fill="#86acdc" stroke="#3c6cb4" stroke-width="1"/><path d="M3.5 5.5h11" stroke="#b8d0f0" stroke-width="1"/></svg>
<div class="t" style="left:65px;top:401px;font-size:12px;letter-spacing:0.3px;line-height:16px">20100505_121001</div>
<div class="a" style="left:54px;top:415px;width:1px;height:9px;background:repeating-linear-gradient(180deg,#909090 0 1px,transparent 1px 2px)"></div>
<div class="a" style="left:55px;top:424px;width:10px;height:1px;background:repeating-linear-gradient(90deg,#909090 0 1px,transparent 1px 2px)"></div>
<svg style="left:65px;top:416px" width="18" height="17"><rect x="0.5" y="0.5" width="13" height="14" rx="1" fill="#fafafa" stroke="#8c8c8c"/><rect x="2" y="2" width="10" height="2" fill="#c0c0c0"/><rect x="2" y="4" width="3" height="9" fill="#cfcfcf"/><path d="M2 6.5h10M2 9h10M8.5 4v8" stroke="#d4dde4" stroke-width="1"/><ellipse cx="10.5" cy="11.3" rx="5.6" ry="4.1" fill="#d0583c" stroke="#c00c0c" stroke-width="1.2"/><path d="M10.5 11.3L15.6 9.6A5.6 4.1 0 0 1 12.6 15Z" fill="#2a9cd0"/><path d="M10.5 11.3L12.6 15A5.6 4.1 0 0 1 9 15.3Z" fill="#d8e060"/></svg>
<div class="t" style="left:84px;top:417px;font-size:12px;letter-spacing:0.45px;line-height:16px;color:#000">Luftfeuchte_TimeLoop.dat</div>
<div class="a" style="left:31px;top:436px;width:9px;height:9px;background:#fff;border:1px solid #8a8a8a"></div>
<div class="a" style="left:33px;top:440px;width:5px;height:1px;background:#000"></div>
<div class="a" style="left:41px;top:440px;width:5px;height:1px;background:repeating-linear-gradient(90deg,#909090 0 1px,transparent 1px 2px)"></div>
<svg style="left:46px;top:432px" width="17" height="16"><path d="M0.5 14.5v-12.5l1-1h5l1.5 1.5h5.5v12z" fill="#c8c8c8" stroke="#8a8a8a" stroke-width="1"/><path d="M2.5 4.5h13v9.5l-1 1h-12z" fill="#86acdc" stroke="#3c6cb4" stroke-width="1"/><path d="M3.5 5.5h11" stroke="#b8d0f0" stroke-width="1"/></svg>
<div class="t" style="left:65px;top:433px;font-size:12px;letter-spacing:0.3px;line-height:16px">20100505_121230</div>
<div class="a" style="left:54px;top:447px;width:1px;height:9px;background:repeating-linear-gradient(180deg,#909090 0 1px,transparent 1px 2px)"></div>
<div class="a" style="left:55px;top:456px;width:10px;height:1px;background:repeating-linear-gradient(90deg,#909090 0 1px,transparent 1px 2px)"></div>
<svg style="left:65px;top:448px" width="18" height="17"><rect x="0.5" y="0.5" width="13" height="14" rx="1" fill="#fafafa" stroke="#8c8c8c"/><rect x="2" y="2" width="10" height="2" fill="#c0c0c0"/><rect x="2" y="4" width="3" height="9" fill="#cfcfcf"/><path d="M2 6.5h10M2 9h10M8.5 4v8" stroke="#d4dde4" stroke-width="1"/><ellipse cx="10.5" cy="11.3" rx="5.6" ry="4.1" fill="#d0583c" stroke="#c00c0c" stroke-width="1.2"/><path d="M10.5 11.3L15.6 9.6A5.6 4.1 0 0 1 12.6 15Z" fill="#2a9cd0"/><path d="M10.5 11.3L12.6 15A5.6 4.1 0 0 1 9 15.3Z" fill="#d8e060"/></svg>
<div class="t" style="left:84px;top:449px;font-size:12px;letter-spacing:0.45px;line-height:16px;color:#000">Luftfeuchte_TimeLoop.dat</div>
<div class="a" style="left:31px;top:468px;width:9px;height:9px;background:#fff;border:1px solid #8a8a8a"></div>
<div class="a" style="left:33px;top:472px;width:5px;height:1px;background:#000"></div>
<div class="a" style="left:41px;top:472px;width:5px;height:1px;background:repeating-linear-gradient(90deg,#909090 0 1px,transparent 1px 2px)"></div>
<svg style="left:46px;top:464px" width="17" height="16"><path d="M0.5 14.5v-12.5l1-1h5l1.5 1.5h5.5v12z" fill="#c8c8c8" stroke="#8a8a8a" stroke-width="1"/><path d="M2.5 4.5h13v9.5l-1 1h-12z" fill="#86acdc" stroke="#3c6cb4" stroke-width="1"/><path d="M3.5 5.5h11" stroke="#b8d0f0" stroke-width="1"/></svg>
<div class="t" style="left:65px;top:465px;font-size:12px;letter-spacing:0.3px;line-height:16px">20100505_121453</div>
<div class="a" style="left:54px;top:479px;width:1px;height:9px;background:repeating-linear-gradient(180deg,#909090 0 1px,transparent 1px 2px)"></div>
<div class="a" style="left:55px;top:488px;width:10px;height:1px;background:repeating-linear-gradient(90deg,#909090 0 1px,transparent 1px 2px)"></div>
<svg style="left:65px;top:480px" width="18" height="17"><rect x="0.5" y="0.5" width="13" height="14" rx="1" fill="#fafafa" stroke="#8c8c8c"/><rect x="2" y="2" width="10" height="2" fill="#c0c0c0"/><rect x="2" y="4" width="3" height="9" fill="#cfcfcf"/><path d="M2 6.5h10M2 9h10M8.5 4v8" stroke="#d4dde4" stroke-width="1"/><ellipse cx="10.5" cy="11.3" rx="5.6" ry="4.1" fill="#d0583c" stroke="#c00c0c" stroke-width="1.2"/><path d="M10.5 11.3L15.6 9.6A5.6 4.1 0 0 1 12.6 15Z" fill="#2a9cd0"/><path d="M10.5 11.3L12.6 15A5.6 4.1 0 0 1 9 15.3Z" fill="#d8e060"/></svg>
<div class="t" style="left:84px;top:481px;font-size:12px;letter-spacing:0.45px;line-height:16px;color:#000">Luftfeuchte_TimeLoop.dat</div>
<div class="a" style="left:31px;top:500px;width:9px;height:9px;background:#fff;border:1px solid #8a8a8a"></div>
<div class="a" style="left:33px;top:504px;width:5px;height:1px;background:#000"></div>
<div class="a" style="left:41px;top:504px;width:5px;height:1px;background:repeating-linear-gradient(90deg,#909090 0 1px,transparent 1px 2px)"></div>
<svg style="left:46px;top:496px" width="17" height="16"><path d="M0.5 14.5v-12.5l1-1h5l1.5 1.5h5.5v12z" fill="#c8c8c8" stroke="#8a8a8a" stroke-width="1"/><path d="M2.5 4.5h13v9.5l-1 1h-12z" fill="#86acdc" stroke="#3c6cb4" stroke-width="1"/><path d="M3.5 5.5h11" stroke="#b8d0f0" stroke-width="1"/></svg>
<div class="t" style="left:65px;top:497px;font-size:12px;letter-spacing:0.3px;line-height:16px">20100505_121542</div>
<div class="a" style="left:54px;top:511px;width:1px;height:9px;background:repeating-linear-gradient(180deg,#909090 0 1px,transparent 1px 2px)"></div>
<div class="a" style="left:55px;top:520px;width:10px;height:1px;background:repeating-linear-gradient(90deg,#909090 0 1px,transparent 1px 2px)"></div>
<svg style="left:65px;top:512px" width="18" height="17"><rect x="0.5" y="0.5" width="13" height="14" rx="1" fill="#fafafa" stroke="#8c8c8c"/><rect x="2" y="2" width="10" height="2" fill="#c0c0c0"/><rect x="2" y="4" width="3" height="9" fill="#cfcfcf"/><path d="M2 6.5h10M2 9h10M8.5 4v8" stroke="#d4dde4" stroke-width="1"/><ellipse cx="10.5" cy="11.3" rx="5.6" ry="4.1" fill="#d0583c" stroke="#c00c0c" stroke-width="1.2"/><path d="M10.5 11.3L15.6 9.6A5.6 4.1 0 0 1 12.6 15Z" fill="#2a9cd0"/><path d="M10.5 11.3L12.6 15A5.6 4.1 0 0 1 9 15.3Z" fill="#d8e060"/></svg>
<div class="t" style="left:84px;top:513px;font-size:12px;letter-spacing:0.45px;line-height:16px;color:#000">Luftfeuchte_TimeLoop.dat</div></div></div>
<div class="a" style="left:4px;top:554px;width:250px;height:1px;background:#000;"></div>
<div class="a" style="left:4px;top:554px;width:2px;height:171px;background:#000;"></div>
<div class="a" style="left:253px;top:554px;width:1px;height:171px;background:#d6edd8;"></div>
<div class="a" style="left:4px;top:724px;width:250px;height:2px;background:#d6edd8;"></div>
<div class="a" style="left:259px;top:98px;width:936px;height:1px;background:#000;"></div>
<div class="a" style="left:259px;top:98px;width:1px;height:627px;background:#000;"></div>
<div class="a" style="left:1195px;top:98px;width:1px;height:628px;background:#d6edd8;"></div>
<div class="a" style="left:259px;top:724px;width:936px;height:1px;background:#000;"></div>
<div class="a" style="left:1194px;top:98px;width:1px;height:627px;background:#000;"></div>
<div class="a" style="left:260px;top:121px;width:936px;height:1px;background:#d6edd8;"></div>
<div class="a" style="left:263px;top:102px;width:275px;height:1px;background:#d6edd8;"></div>
<div class="a" style="left:262px;top:103px;width:1px;height:18px;background:#d6edd8;"></div>
<div class="a" style="left:538px;top:103px;width:1px;height:18px;background:#000;"></div>
<div class="a" style="left:537px;top:103px;width:1px;height:18px;background:#5e9a6e;"></div>
<div class="t" style="left:267px;top:104.84px;font-size:12px;letter-spacing:0.42px;color:#000;line-height:16px;">Verdunstung_TimeLoop.dat 20100505_114840</div>
<div class="a" style="left:540px;top:102px;width:258px;height:1px;background:#d6edd8;"></div>
<div class="a" style="left:539px;top:103px;width:1px;height:18px;background:#d6edd8;"></div>
<div class="a" style="left:798px;top:103px;width:1px;height:18px;background:#000;"></div>
<div class="a" style="left:797px;top:103px;width:1px;height:18px;background:#5e9a6e;"></div>
<div class="t" style="left:544px;top:104.84px;font-size:12px;letter-spacing:0.35px;color:#000;line-height:16px;">Strahlung_TimeLoop.dat 20100505_114818</div>
<div class="a" style="left:797px;top:100px;width:298px;height:23px;background:#a3c8a7;"></div>
<div class="a" style="left:799px;top:100px;width:295px;height:1px;background:#d6edd8;"></div>
<div class="a" style="left:797px;top:102px;width:1px;height:20px;background:#d6edd8;"></div>
<div class="a" style="left:798px;top:101px;width:1px;height:1px;background:#d6edd8;"></div>
<div class="a" style="left:1094px;top:101px;width:1px;height:21px;background:#000;"></div>
<div class="a" style="left:1093px;top:101px;width:1px;height:21px;background:#5e9a6e;"></div>
<div class="t" style="left:804px;top:102.84px;font-size:12px;letter-spacing:0.35px;color:#000;line-height:16px;">Regionalizer_SpaceLoop_1.dat 20100505_113920</div>
<div class="a" style="left:260px;top:121px;width:1px;height:603px;background:#d6edd8;"></div>
<div class="a" style="left:262px;top:123px;width:930px;height:1px;background:#5e9a6e;"></div>
<div class="a" style="left:263px;top:124px;width:929px;height:1px;background:#000;"></div>
<div class="a" style="left:262px;top:123px;width:1px;height:278px;background:#5e9a6e;"></div>
<div class="a" style="left:263px;top:124px;width:1px;height:276px;background:#000;"></div>
<div class="a" style="left:1191px;top:123px;width:1px;height:278px;background:#d6edd8;"></div>
<div class="a" style="left:262px;top:400px;width:930px;height:1px;background:#d6edd8;"></div>
<div class="a" style="left:1193px;top:121px;width:1px;height:280px;background:#5e9a6e;"></div>
<div class="a" style="left:264px;top:125px;width:907px;height:256px;overflow:hidden"><div class="a" style="left:-264px;top:-125px;width:1200px;height:750px"><div class="t" style="left:266px;top:127.84px;font-size:12px;letter-spacing:0.35px;color:#000;line-height:16px;">Attribute/Aggregation:</div>
<div class="a" style="left:266px;top:147px;width:248px;height:1px;background:#5e9a6e;"></div>
<div class="a" style="left:266px;top:147px;width:1px;height:240px;background:#5e9a6e;"></div>
<div class="a" style="left:267px;top:148px;width:246px;height:1px;background:#000;"></div>
<div class="a" style="left:267px;top:148px;width:1px;height:240px;background:#000;"></div>
<div class="a" style="left:513px;top:147px;width:1px;height:240px;background:#d6edd8;"></div>
<div class="t" style="left:288px;top:210.84px;font-size:12px;letter-spacing:0.45px;color:#000;line-height:16px;">Area attribute</div>
<div class="a" style="left:383px;top:206px;width:111px;height:23px;background:#fff;"></div>
<div class="a" style="left:383px;top:206px;width:111px;height:1px;background:#5e9a6e;"></div>
<div class="a" style="left:383px;top:206px;width:1px;height:23px;background:#5e9a6e;"></div>
<div class="a" style="left:384px;top:207px;width:109px;height:1px;background:#000;"></div>
<div class="a" style="left:384px;top:207px;width:1px;height:21px;background:#000;"></div>
<div class="a" style="left:383px;top:228px;width:111px;height:1px;background:#d6edd8;"></div>
<div class="a" style="left:493px;top:206px;width:1px;height:23px;background:#d6edd8;"></div>
<div class="a" style="left:472px;top:208px;width:20px;height:19px;background:#a3c8a7;"></div>
<div class="a" style="left:472px;top:208px;width:20px;height:1px;background:#d6edd8;"></div>
<div class="a" style="left:472px;top:208px;width:1px;height:19px;background:#d6edd8;"></div>
<div class="a" style="left:472px;top:226px;width:20px;height:1px;background:#000;"></div>
<div class="a" style="left:491px;top:208px;width:1px;height:19px;background:#000;"></div>
<div class="a" style="left:473px;top:225px;width:18px;height:1px;background:#5e9a6e;"></div>
<div class="a" style="left:490px;top:209px;width:1px;height:17px;background:#5e9a6e;"></div>
<svg style="left:472px;top:208px" width="20" height="19"><path d="M5.5 7.5h8l-4 4.5z" fill="#000"/></svg>
<div class="t" style="left:387px;top:210.84px;font-size:12px;letter-spacing:0.35px;color:#000;line-height:16px;">[choose]</div>
<div class="a" style="left:292px;top:240px;width:13px;height:13px;background:#fff;"></div>
<div class="a" style="left:292px;top:240px;width:13px;height:1px;background:#5e9a6e;"></div>
<div class="a" style="left:292px;top:240px;width:1px;height:13px;background:#5e9a6e;"></div>
<div class="a" style="left:293px;top:241px;width:11px;height:1px;background:#000;"></div>
<div class="a" style="left:293px;top:241px;width:1px;height:11px;background:#000;"></div>
<div class="a" style="left:292px;top:252px;width:13px;height:1px;background:#d6edd8;"></div>
<div class="a" style="left:304px;top:240px;width:1px;height:13px;background:#d6edd8;"></div>
<div class="t" style="left:309px;top:238.34px;font-size:12px;letter-spacing:0.4px;color:#000;line-height:16px;">All on/off</div>
<div class="t" style="left:383px;top:238.84px;font-size:12px;letter-spacing:0.45px;color:#000;line-height:16px;">Aggregation weight</div>
<div class="t" style="left:390.5px;top:264.34px;font-size:12px;letter-spacing:0.35px;color:#000;line-height:16px;">1</div>
<div class="t" style="left:409px;top:264.34px;font-size:12px;letter-spacing:0.35px;color:#000;line-height:16px;">1/n</div>
<div class="t" style="left:433.5px;top:264.34px;font-size:12px;letter-spacing:0.35px;color:#000;line-height:16px;">w/W</div>
<div class="a" style="left:292px;top:289px;width:13px;height:13px;background:#fff;"></div>
<div class="a" style="left:292px;top:289px;width:13px;height:1px;background:#5e9a6e;"></div>
<div class="a" style="left:292px;top:289px;width:1px;height:13px;background:#5e9a6e;"></div>
<div class="a" style="left:293px;top:290px;width:11px;height:1px;background:#000;"></div>
<div class="a" style="left:293px;top:290px;width:1px;height:11px;background:#000;"></div>
<div class="a" style="left:292px;top:301px;width:13px;height:1px;background:#d6edd8;"></div>
<div class="a" style="left:304px;top:289px;width:1px;height:13px;background:#d6edd8;"></div>
<svg style="left:292px;top:289px" width="13" height="13"><path d="M3 6l2.5 2.5 4.5-5" stroke="#000" stroke-width="2" fill="none"/></svg>
<div class="t" style="left:309px;top:287.84px;font-size:12px;letter-spacing:0.4px;color:#000;line-height:16px;">rhum</div>
<div class="a" style="left:292px;top:318px;width:13px;height:13px;background:#fff;"></div>
<div class="a" style="left:292px;top:318px;width:13px;height:1px;background:#5e9a6e;"></div>
<div class="a" style="left:292px;top:318px;width:1px;height:13px;background:#5e9a6e;"></div>
<div class="a" style="left:293px;top:319px;width:11px;height:1px;background:#000;"></div>
<div class="a" style="left:293px;top:319px;width:1px;height:11px;background:#000;"></div>
<div class="a" style="left:292px;top:330px;width:13px;height:1px;background:#d6edd8;"></div>
<div class="a" style="left:304px;top:318px;width:1px;height:13px;background:#d6edd8;"></div>
<div class="t" style="left:309px;top:316.84px;font-size:12px;letter-spacing:0px;color:#000;line-height:16px;">ELEVATION</div>
<svg style="left:387px;top:289px" width="12" height="12"><circle cx="6" cy="6" r="4.8" fill="#fff"/><path d="M10.8 4.1A5.4 5.4 0 0 1 1.2 7.9" stroke="#d6edd8" stroke-width="1" fill="none"/><path d="M0.9 8.2A5.6 5.6 0 0 1 10.9 3.4" stroke="#5e9a6e" stroke-width="0.8" fill="none"/><path d="M1.6 7.6A4.6 4.6 0 0 1 10.3 4.2" stroke="#000" stroke-width="1.3" fill="none"/><circle cx="6" cy="6" r="2" fill="#000"/></svg>
<svg style="left:412px;top:289px" width="12" height="12"><circle cx="6" cy="6" r="4.8" fill="#fff"/><path d="M10.8 4.1A5.4 5.4 0 0 1 1.2 7.9" stroke="#d6edd8" stroke-width="1" fill="none"/><path d="M0.9 8.2A5.6 5.6 0 0 1 10.9 3.4" stroke="#5e9a6e" stroke-width="0.8" fill="none"/><path d="M1.6 7.6A4.6 4.6 0 0 1 10.3 4.2" stroke="#000" stroke-width="1.3" fill="none"/></svg>
<svg style="left:437px;top:289px" width="12" height="12"><circle cx="6" cy="6" r="4.8" fill="#fff"/><path d="M10.8 4.1A5.4 5.4 0 0 1 1.2 7.9" stroke="#d6edd8" stroke-width="1" fill="none"/><path d="M0.9 8.2A5.6 5.6 0 0 1 10.9 3.4" stroke="#5e9a6e" stroke-width="0.8" fill="none"/><path d="M1.6 7.6A4.6 4.6 0 0 1 10.3 4.2" stroke="#000" stroke-width="1.3" fill="none"/></svg>
<svg style="left:387px;top:318px" width="12" height="12"><circle cx="6" cy="6" r="4.8" fill="#fff"/><path d="M10.8 4.1A5.4 5.4 0 0 1 1.2 7.9" stroke="#d6edd8" stroke-width="1" fill="none"/><path d="M0.9 8.2A5.6 5.6 0 0 1 10.9 3.4" stroke="#5e9a6e" stroke-width="0.8" fill="none"/><path d="M1.6 7.6A4.6 4.6 0 0 1 10.3 4.2" stroke="#000" stroke-width="1.3" fill="none"/><circle cx="6" cy="6" r="2" fill="#000"/></svg>
<svg style="left:412px;top:318px" width="12" height="12"><circle cx="6" cy="6" r="4.8" fill="#fff"/><path d="M10.8 4.1A5.4 5.4 0 0 1 1.2 7.9" stroke="#d6edd8" stroke-width="1" fill="none"/><path d="M0.9 8.2A5.6 5.6 0 0 1 10.9 3.4" stroke="#5e9a6e" stroke-width="0.8" fill="none"/><path d="M1.6 7.6A4.6 4.6 0 0 1 10.3 4.2" stroke="#000" stroke-width="1.3" fill="none"/></svg>
<svg style="left:437px;top:318px" width="12" height="12"><circle cx="6" cy="6" r="4.8" fill="#fff"/><path d="M10.8 4.1A5.4 5.4 0 0 1 1.2 7.9" stroke="#d6edd8" stroke-width="1" fill="none"/><path d="M0.9 8.2A5.6 5.6 0 0 1 10.9 3.4" stroke="#5e9a6e" stroke-width="0.8" fill="none"/><path d="M1.6 7.6A4.6 4.6 0 0 1 10.3 4.2" stroke="#000" stroke-width="1.3" fill="none"/></svg>
<div class="t" style="left:520px;top:127.84px;font-size:12px;letter-spacing:0.4px;color:#000;line-height:16px;">Time Steps:</div>
<div class="a" style="left:520px;top:147px;width:149px;height:240px;background:#fff;"></div>
<div class="a" style="left:520px;top:147px;width:149px;height:1px;background:#5e9a6e;"></div>
<div class="a" style="left:520px;top:147px;width:1px;height:240px;background:#5e9a6e;"></div>
<div class="a" style="left:521px;top:148px;width:147px;height:1px;background:#000;"></div>
<div class="a" style="left:521px;top:148px;width:1px;height:238px;background:#000;"></div>
<div class="a" style="left:668px;top:147px;width:1px;height:240px;background:#d6edd8;"></div>
<div class="t" style="left:523.5px;top:150.84px;font-size:12px;letter-spacing:0.4px;color:#000;line-height:16px;">1999-01-01 07:30</div>
<div class="t" style="left:523.5px;top:168.84px;font-size:12px;letter-spacing:0.4px;color:#000;line-height:16px;">1999-01-02 07:30</div>
<div class="t" style="left:523.5px;top:186.84px;font-size:12px;letter-spacing:0.4px;color:#000;line-height:16px;">1999-01-03 07:30</div>
<div class="t" style="left:523.5px;top:204.84px;font-size:12px;letter-spacing:0.4px;color:#000;line-height:16px;">1999-01-04 07:30</div>
<div class="t" style="left:523.5px;top:222.84px;font-size:12px;letter-spacing:0.4px;color:#000;line-height:16px;">1999-01-05 07:30</div>
<div class="t" style="left:523.5px;top:240.84px;font-size:12px;letter-spacing:0.4px;color:#000;line-height:16px;">1999-01-06 07:30</div>
<div class="t" style="left:523.5px;top:258.84px;font-size:12px;letter-spacing:0.4px;color:#000;line-height:16px;">1999-01-07 07:30</div>
<div class="a" style="left:522px;top:275px;width:127px;height:18px;background:#5e9a6e;"></div>
<div class="t" style="left:523.5px;top:276.84px;font-size:12px;letter-spacing:0.4px;color:#fff;line-height:16px;">1999-01-08 07:30</div>
<div class="t" style="left:523.5px;top:294.84px;font-size:12px;letter-spacing:0.4px;color:#000;line-height:16px;">1999-01-09 07:30</div>
<div class="t" style="left:523.5px;top:312.84px;font-size:12px;letter-spacing:0.4px;color:#000;line-height:16px;">1999-01-10 07:30</div>
<div class="t" style="left:523.5px;top:330.84px;font-size:12px;letter-spacing:0.4px;color:#000;line-height:16px;">1999-01-11 07:30</div>
<div class="t" style="left:523.5px;top:348.84px;font-size:12px;letter-spacing:0.4px;color:#000;line-height:16px;">1999-01-12 07:30</div>
<div class="t" style="left:523.5px;top:366.84px;font-size:12px;letter-spacing:0.4px;color:#000;line-height:16px;">1999-01-13 07:30</div>
<div class="a" style="left:649px;top:149px;width:19px;height:240px;background:repeating-conic-gradient(#ffffff 0% 25%, #c4dec8 0% 50%) 0 0/2px 2px;"></div>
<div class="a" style="left:649px;top:149px;width:19px;height:19px;background:#a3c8a7;"></div>
<div class="a" style="left:649px;top:149px;width:19px;height:1px;background:#bcd9c0;"></div>
<div class="a" style="left:649px;top:149px;width:1px;height:19px;background:#bcd9c0;"></div>
<div class="a" style="left:650px;top:150px;width:16px;height:1px;background:#d6edd8;"></div>
<div class="a" style="left:650px;top:150px;width:1px;height:16px;background:#d6edd8;"></div>
<div class="a" style="left:649px;top:167px;width:19px;height:1px;background:#000;"></div>
<div class="a" style="left:667px;top:149px;width:1px;height:19px;background:#000;"></div>
<div class="a" style="left:650px;top:166px;width:17px;height:1px;background:#5e9a6e;"></div>
<div class="a" style="left:666px;top:150px;width:1px;height:17px;background:#5e9a6e;"></div>
<svg style="left:649px;top:149px" width="19" height="19"><path d="M4 12h9.5l-4.75-5z" fill="#000"/></svg>
<div class="a" style="left:649px;top:168px;width:19px;height:8px;background:#a3c8a7;"></div>
<div class="a" style="left:649px;top:168px;width:19px;height:1px;background:#bcd9c0;"></div>
<div class="a" style="left:649px;top:168px;width:1px;height:8px;background:#bcd9c0;"></div>
<div class="a" style="left:650px;top:169px;width:16px;height:1px;background:#d6edd8;"></div>
<div class="a" style="left:650px;top:169px;width:1px;height:5px;background:#d6edd8;"></div>
<div class="a" style="left:649px;top:175px;width:19px;height:1px;background:#000;"></div>
<div class="a" style="left:667px;top:168px;width:1px;height:8px;background:#000;"></div>
<div class="a" style="left:650px;top:174px;width:17px;height:1px;background:#5e9a6e;"></div>
<div class="a" style="left:666px;top:169px;width:1px;height:6px;background:#5e9a6e;"></div>
<div class="a" style="left:649px;top:376px;width:19px;height:19px;background:#a3c8a7;"></div>
<div class="a" style="left:649px;top:376px;width:19px;height:1px;background:#bcd9c0;"></div>
<div class="a" style="left:649px;top:376px;width:1px;height:19px;background:#bcd9c0;"></div>
<div class="a" style="left:650px;top:377px;width:16px;height:1px;background:#d6edd8;"></div>
<div class="a" style="left:650px;top:377px;width:1px;height:16px;background:#d6edd8;"></div>
<div class="a" style="left:649px;top:394px;width:19px;height:1px;background:#000;"></div>
<div class="a" style="left:667px;top:376px;width:1px;height:19px;background:#000;"></div>
<div class="a" style="left:650px;top:393px;width:17px;height:1px;background:#5e9a6e;"></div>
<div class="a" style="left:666px;top:377px;width:1px;height:17px;background:#5e9a6e;"></div>
<div class="t" style="left:673px;top:127.84px;font-size:12px;letter-spacing:0.4px;color:#000;line-height:16px;">Entitiy IDs:</div>
<div class="a" style="left:674px;top:147px;width:99px;height:240px;background:#fff;"></div>
<div class="a" style="left:674px;top:147px;width:99px;height:1px;background:#5e9a6e;"></div>
<div class="a" style="left:674px;top:147px;width:1px;height:240px;background:#5e9a6e;"></div>
<div class="a" style="left:675px;top:148px;width:97px;height:1px;background:#000;"></div>
<div class="a" style="left:675px;top:148px;width:1px;height:238px;background:#000;"></div>
<div class="a" style="left:772px;top:147px;width:1px;height:240px;background:#d6edd8;"></div>
<div class="t" style="left:678px;top:150.84px;font-size:12px;letter-spacing:0.4px;color:#000;line-height:16px;">1</div>
<div class="t" style="left:678px;top:168.84px;font-size:12px;letter-spacing:0.4px;color:#000;line-height:16px;">2</div>
<div class="t" style="left:678px;top:186.84px;font-size:12px;letter-spacing:0.4px;color:#000;line-height:16px;">3</div>
<div class="t" style="left:678px;top:204.84px;font-size:12px;letter-spacing:0.4px;color:#000;line-height:16px;">4</div>
<div class="t" style="left:678px;top:222.84px;font-size:12px;letter-spacing:0.4px;color:#000;line-height:16px;">5</div>
<div class="t" style="left:678px;top:240.84px;font-size:12px;letter-spacing:0.4px;color:#000;line-height:16px;">6</div>
<div class="t" style="left:678px;top:258.84px;font-size:12px;letter-spacing:0.4px;color:#000;line-height:16px;">7</div>
<div class="t" style="left:678px;top:276.84px;font-size:12px;letter-spacing:0.4px;color:#000;line-height:16px;">8</div>
<div class="t" style="left:678px;top:294.84px;font-size:12px;letter-spacing:0.4px;color:#000;line-height:16px;">9</div>
<div class="t" style="left:678px;top:312.84px;font-size:12px;letter-spacing:0.4px;color:#000;line-height:16px;">10</div>
<div class="t" style="left:678px;top:330.84px;font-size:12px;letter-spacing:0.4px;color:#000;line-height:16px;">11</div>
<div class="t" style="left:678px;top:348.84px;font-size:12px;letter-spacing:0.4px;color:#000;line-height:16px;">12</div>
<div class="t" style="left:678px;top:366.84px;font-size:12px;letter-spacing:0.4px;color:#000;line-height:16px;">13</div>
<div class="a" style="left:753px;top:149px;width:19px;height:240px;background:repeating-conic-gradient(#ffffff 0% 25%, #c4dec8 0% 50%) 0 0/2px 2px;"></div>
<div class="a" style="left:753px;top:149px;width:19px;height:19px;background:#a3c8a7;"></div>
<div class="a" style="left:753px;top:149px;width:19px;height:1px;background:#bcd9c0;"></div>
<div class="a" style="left:753px;top:149px;width:1px;height:19px;background:#bcd9c0;"></div>
<div class="a" style="left:754px;top:150px;width:16px;height:1px;background:#d6edd8;"></div>
<div class="a" style="left:754px;top:150px;width:1px;height:16px;background:#d6edd8;"></div>
<div class="a" style="left:753px;top:167px;width:19px;height:1px;background:#000;"></div>
<div class="a" style="left:771px;top:149px;width:1px;height:19px;background:#000;"></div>
<div class="a" style="left:754px;top:166px;width:17px;height:1px;background:#5e9a6e;"></div>
<div class="a" style="left:770px;top:150px;width:1px;height:17px;background:#5e9a6e;"></div>
<svg style="left:753px;top:149px" width="19" height="19"><path d="M4 12h9.5l-4.75-5z" fill="#000"/></svg>
<div class="a" style="left:753px;top:168px;width:19px;height:8px;background:#a3c8a7;"></div>
<div class="a" style="left:753px;top:168px;width:19px;height:1px;background:#bcd9c0;"></div>
<div class="a" style="left:753px;top:168px;width:1px;height:8px;background:#bcd9c0;"></div>
<div class="a" style="left:754px;top:169px;width:16px;height:1px;background:#d6edd8;"></div>
<div class="a" style="left:754px;top:169px;width:1px;height:5px;background:#d6edd8;"></div>
<div class="a" style="left:753px;top:175px;width:19px;height:1px;background:#000;"></div>
<div class="a" style="left:771px;top:168px;width:1px;height:8px;background:#000;"></div>
<div class="a" style="left:754px;top:174px;width:17px;height:1px;background:#5e9a6e;"></div>
<div class="a" style="left:770px;top:169px;width:1px;height:6px;background:#5e9a6e;"></div>
<div class="a" style="left:753px;top:376px;width:19px;height:19px;background:#a3c8a7;"></div>
<div class="a" style="left:753px;top:376px;width:19px;height:1px;background:#bcd9c0;"></div>
<div class="a" style="left:753px;top:376px;width:1px;height:19px;background:#bcd9c0;"></div>
<div class="a" style="left:754px;top:377px;width:16px;height:1px;background:#d6edd8;"></div>
<div class="a" style="left:754px;top:377px;width:1px;height:16px;background:#d6edd8;"></div>
<div class="a" style="left:753px;top:394px;width:19px;height:1px;background:#000;"></div>
<div class="a" style="left:771px;top:376px;width:1px;height:19px;background:#000;"></div>
<div class="a" style="left:754px;top:393px;width:17px;height:1px;background:#5e9a6e;"></div>
<div class="a" style="left:770px;top:377px;width:1px;height:17px;background:#5e9a6e;"></div>
<div class="a" style="left:778px;top:152px;width:150px;height:25px;background:#a3c8a7;"></div>
<div class="a" style="left:778px;top:152px;width:150px;height:1px;background:#000;"></div>
<div class="a" style="left:778px;top:152px;width:1px;height:25px;background:#000;"></div>
<div class="a" style="left:778px;top:175px;width:150px;height:2px;background:#000;"></div>
<div class="a" style="left:926px;top:152px;width:2px;height:25px;background:#000;"></div>
<div class="a" style="left:779px;top:153px;width:147px;height:1px;background:#d6edd8;"></div>
<div class="a" style="left:779px;top:153px;width:1px;height:22px;background:#d6edd8;"></div>
<div class="a" style="left:780px;top:174px;width:146px;height:1px;background:#5e9a6e;"></div>
<div class="a" style="left:925px;top:154px;width:1px;height:21px;background:#5e9a6e;"></div>
<div class="a" style="left:782px;top:156px;width:142px;height:17px;border:1px dotted #000"></div>
<div class="t" style="left:778px;top:156.84px;font-size:12px;letter-spacing:0.4px;color:#000;line-height:16px;width:150px;text-align:center;">Time Step</div>
<div class="a" style="left:778px;top:182px;width:150px;height:25px;background:#a3c8a7;"></div>
<div class="a" style="left:778px;top:182px;width:149px;height:1px;background:#d6edd8;"></div>
<div class="a" style="left:778px;top:182px;width:1px;height:24px;background:#d6edd8;"></div>
<div class="a" style="left:778px;top:206px;width:150px;height:1px;background:#000;"></div>
<div class="a" style="left:927px;top:182px;width:1px;height:25px;background:#000;"></div>
<div class="a" style="left:779px;top:205px;width:148px;height:1px;background:#5e9a6e;"></div>
<div class="a" style="left:926px;top:183px;width:1px;height:23px;background:#5e9a6e;"></div>
<div class="t" style="left:778px;top:186.84px;font-size:12px;letter-spacing:0.4px;color:#52965f;line-height:16px;width:150px;text-align:center;text-shadow:1px 1px 0 #d6edd8;">Temp. Mean</div>
<div class="a" style="left:778px;top:212px;width:150px;height:25px;background:#a3c8a7;"></div>
<div class="a" style="left:778px;top:212px;width:149px;height:1px;background:#d6edd8;"></div>
<div class="a" style="left:778px;top:212px;width:1px;height:24px;background:#d6edd8;"></div>
<div class="a" style="left:778px;top:236px;width:150px;height:1px;background:#000;"></div>
<div class="a" style="left:927px;top:212px;width:1px;height:25px;background:#000;"></div>
<div class="a" style="left:779px;top:235px;width:148px;height:1px;background:#5e9a6e;"></div>
<div class="a" style="left:926px;top:213px;width:1px;height:23px;background:#5e9a6e;"></div>
<div class="t" style="left:778px;top:216.84px;font-size:12px;letter-spacing:0.4px;color:#52965f;line-height:16px;width:150px;text-align:center;text-shadow:1px 1px 0 #d6edd8;">Spatial Entity</div>
<div class="a" style="left:778px;top:242px;width:150px;height:25px;background:#a3c8a7;"></div>
<div class="a" style="left:778px;top:242px;width:149px;height:1px;background:#d6edd8;"></div>
<div class="a" style="left:778px;top:242px;width:1px;height:24px;background:#d6edd8;"></div>
<div class="a" style="left:778px;top:266px;width:150px;height:1px;background:#000;"></div>
<div class="a" style="left:927px;top:242px;width:1px;height:25px;background:#000;"></div>
<div class="a" style="left:779px;top:265px;width:148px;height:1px;background:#5e9a6e;"></div>
<div class="a" style="left:926px;top:243px;width:1px;height:23px;background:#5e9a6e;"></div>
<div class="t" style="left:778px;top:246.84px;font-size:12px;letter-spacing:0.4px;color:#52965f;line-height:16px;width:150px;text-align:center;text-shadow:1px 1px 0 #d6edd8;">Spatial Mean</div>
<div class="a" style="left:778px;top:272px;width:150px;height:25px;background:#a3c8a7;"></div>
<div class="a" style="left:778px;top:272px;width:149px;height:1px;background:#d6edd8;"></div>
<div class="a" style="left:778px;top:272px;width:1px;height:24px;background:#d6edd8;"></div>
<div class="a" style="left:778px;top:296px;width:150px;height:1px;background:#000;"></div>
<div class="a" style="left:927px;top:272px;width:1px;height:25px;background:#000;"></div>
<div class="a" style="left:779px;top:295px;width:148px;height:1px;background:#5e9a6e;"></div>
<div class="a" style="left:926px;top:273px;width:1px;height:23px;background:#5e9a6e;"></div>
<div class="t" style="left:778px;top:276.84px;font-size:12px;letter-spacing:0.4px;color:#52965f;line-height:16px;width:150px;text-align:center;text-shadow:1px 1px 0 #d6edd8;">Crossproduct</div>
<div class="a" style="left:778px;top:302px;width:150px;height:1px;background:#5e9a6e;"></div>
<div class="a" style="left:778px;top:302px;width:1px;height:90px;background:#5e9a6e;"></div>
<div class="a" style="left:779px;top:303px;width:148px;height:1px;background:#d6edd8;"></div>
<div class="a" style="left:779px;top:303px;width:1px;height:90px;background:#d6edd8;"></div>
<div class="a" style="left:927px;top:302px;width:1px;height:90px;background:#d6edd8;"></div>
<div class="t" style="left:778px;top:309.34px;font-size:12px;letter-spacing:0.4px;color:#000;line-height:16px;width:150px;text-align:center;">Time Filter:</div>
<div class="a" style="left:788px;top:331px;width:130px;height:21px;background:#fff;"></div>
<div class="a" style="left:788px;top:331px;width:130px;height:1px;background:#5e9a6e;"></div>
<div class="a" style="left:788px;top:331px;width:1px;height:21px;background:#5e9a6e;"></div>
<div class="a" style="left:789px;top:332px;width:128px;height:1px;background:#000;"></div>
<div class="a" style="left:789px;top:332px;width:1px;height:19px;background:#000;"></div>
<div class="a" style="left:788px;top:351px;width:130px;height:1px;background:#d6edd8;"></div>
<div class="a" style="left:917px;top:331px;width:1px;height:21px;background:#d6edd8;"></div>
<div class="a" style="left:788px;top:357px;width:130px;height:40px;background:#a3c8a7;"></div>
<div class="a" style="left:788px;top:357px;width:129px;height:1px;background:#d6edd8;"></div>
<div class="a" style="left:788px;top:357px;width:1px;height:39px;background:#d6edd8;"></div>
<div class="a" style="left:788px;top:396px;width:130px;height:1px;background:#000;"></div>
<div class="a" style="left:917px;top:357px;width:1px;height:40px;background:#000;"></div>
<div class="a" style="left:789px;top:395px;width:128px;height:1px;background:#5e9a6e;"></div>
<div class="a" style="left:916px;top:358px;width:1px;height:38px;background:#5e9a6e;"></div>
<div class="t" style="left:807px;top:361.84px;font-size:12px;letter-spacing:0.4px;color:#52965f;line-height:16px;text-shadow:1px 1px 0 #d6edd8;">Temp. Mean (...</div>
<div class="t" style="left:932px;top:127.84px;font-size:12px;letter-spacing:0.4px;color:#000;line-height:16px;">Months:</div>
<div class="t" style="left:986px;top:127.84px;font-size:12px;letter-spacing:0.4px;color:#000;line-height:16px;">Years:</div>
<div class="a" style="left:932px;top:147px;width:49px;height:240px;background:#fff;"></div>
<div class="a" style="left:932px;top:147px;width:49px;height:1px;background:#5e9a6e;"></div>
<div class="a" style="left:932px;top:147px;width:1px;height:240px;background:#5e9a6e;"></div>
<div class="a" style="left:933px;top:148px;width:47px;height:1px;background:#000;"></div>
<div class="a" style="left:933px;top:148px;width:1px;height:238px;background:#000;"></div>
<div class="a" style="left:980px;top:147px;width:1px;height:240px;background:#d6edd8;"></div>
<div class="t" style="left:935px;top:150.84px;font-size:12px;letter-spacing:0.4px;color:#000;line-height:16px;">1</div>
<div class="t" style="left:935px;top:168.84px;font-size:12px;letter-spacing:0.4px;color:#000;line-height:16px;">2</div>
<div class="t" style="left:935px;top:186.84px;font-size:12px;letter-spacing:0.4px;color:#000;line-height:16px;">3</div>
<div class="t" style="left:935px;top:204.84px;font-size:12px;letter-spacing:0.4px;color:#000;line-height:16px;">4</div>
<div class="t" style="left:935px;top:222.84px;font-size:12px;letter-spacing:0.4px;color:#000;line-height:16px;">5</div>
<div class="t" style="left:935px;top:240.84px;font-size:12px;letter-spacing:0.4px;color:#000;line-height:16px;">6</div>
<div class="t" style="left:935px;top:258.84px;font-size:12px;letter-spacing:0.4px;color:#000;line-height:16px;">7</div>
<div class="t" style="left:935px;top:276.84px;font-size:12px;letter-spacing:0.4px;color:#000;line-height:16px;">8</div>
<div class="t" style="left:935px;top:294.84px;font-size:12px;letter-spacing:0.4px;color:#000;line-height:16px;">9</div>
<div class="t" style="left:935px;top:312.84px;font-size:12px;letter-spacing:0.4px;color:#000;line-height:16px;">10</div>
<div class="t" style="left:935px;top:330.84px;font-size:12px;letter-spacing:0.4px;color:#000;line-height:16px;">11</div>
<div class="t" style="left:935px;top:348.84px;font-size:12px;letter-spacing:0.4px;color:#000;line-height:16px;">12</div>
<div class="a" style="left:986px;top:147px;width:49px;height:240px;background:#fff;"></div>
<div class="a" style="left:986px;top:147px;width:49px;height:1px;background:#5e9a6e;"></div>
<div class="a" style="left:986px;top:147px;width:1px;height:240px;background:#5e9a6e;"></div>
<div class="a" style="left:987px;top:148px;width:47px;height:1px;background:#000;"></div>
<div class="a" style="left:987px;top:148px;width:1px;height:238px;background:#000;"></div>
<div class="a" style="left:1034px;top:147px;width:1px;height:240px;background:#d6edd8;"></div>
<div class="t" style="left:989px;top:150.84px;font-size:12px;letter-spacing:0.4px;color:#000;line-height:16px;">1999</div>
<div class="t" style="left:989px;top:168.84px;font-size:12px;letter-spacing:0.4px;color:#000;line-height:16px;">2000</div>
<div class="a" style="left:1040px;top:152px;width:150px;height:25px;background:#a3c8a7;"></div>
<div class="a" style="left:1040px;top:152px;width:149px;height:1px;background:#d6edd8;"></div>
<div class="a" style="left:1040px;top:152px;width:1px;height:24px;background:#d6edd8;"></div>
<div class="a" style="left:1040px;top:176px;width:150px;height:1px;background:#000;"></div>
<div class="a" style="left:1189px;top:152px;width:1px;height:25px;background:#000;"></div>
<div class="a" style="left:1041px;top:175px;width:148px;height:1px;background:#5e9a6e;"></div>
<div class="a" style="left:1188px;top:153px;width:1px;height:23px;background:#5e9a6e;"></div>
<div class="t" style="left:1040px;top:156.84px;font-size:12px;letter-spacing:0.4px;color:#52965f;line-height:16px;width:150px;text-align:center;text-shadow:1px 1px 0 #d6edd8;">Monthly Mean</div>
<div class="a" style="left:1040px;top:182px;width:150px;height:25px;background:#a3c8a7;"></div>
<div class="a" style="left:1040px;top:182px;width:149px;height:1px;background:#d6edd8;"></div>
<div class="a" style="left:1040px;top:182px;width:1px;height:24px;background:#d6edd8;"></div>
<div class="a" style="left:1040px;top:206px;width:150px;height:1px;background:#000;"></div>
<div class="a" style="left:1189px;top:182px;width:1px;height:25px;background:#000;"></div>
<div class="a" style="left:1041px;top:205px;width:148px;height:1px;background:#5e9a6e;"></div>
<div class="a" style="left:1188px;top:183px;width:1px;height:23px;background:#5e9a6e;"></div>
<div class="t" style="left:1040px;top:186.84px;font-size:12px;letter-spacing:0.4px;color:#52965f;line-height:16px;width:150px;text-align:center;text-shadow:1px 1px 0 #d6edd8;">Yearly Mean</div>
<div class="a" style="left:1040px;top:227px;width:150px;height:25px;background:#a3c8a7;"></div>
<div class="a" style="left:1040px;top:227px;width:149px;height:1px;background:#d6edd8;"></div>
<div class="a" style="left:1040px;top:227px;width:1px;height:24px;background:#d6edd8;"></div>
<div class="a" style="left:1040px;top:251px;width:150px;height:1px;background:#000;"></div>
<div class="a" style="left:1189px;top:227px;width:1px;height:25px;background:#000;"></div>
<div class="a" style="left:1041px;top:250px;width:148px;height:1px;background:#5e9a6e;"></div>
<div class="a" style="left:1188px;top:228px;width:1px;height:23px;background:#5e9a6e;"></div>
<div class="t" style="left:1040px;top:231.84px;font-size:12px;letter-spacing:0.4px;color:#000;line-height:16px;width:150px;text-align:center;">Reset Caches</div>
<div class="a" style="left:1040px;top:257px;width:150px;height:25px;background:#a3c8a7;"></div>
<div class="a" style="left:1040px;top:257px;width:149px;height:1px;background:#d6edd8;"></div>
<div class="a" style="left:1040px;top:257px;width:1px;height:24px;background:#d6edd8;"></div>
<div class="a" style="left:1040px;top:281px;width:150px;height:1px;background:#000;"></div>
<div class="a" style="left:1189px;top:257px;width:1px;height:25px;background:#000;"></div>
<div class="a" style="left:1041px;top:280px;width:148px;height:1px;background:#5e9a6e;"></div>
<div class="a" style="left:1188px;top:258px;width:1px;height:23px;background:#5e9a6e;"></div>
<div class="t" style="left:1040px;top:261.84px;font-size:12px;letter-spacing:0.4px;color:#000;line-height:16px;width:150px;text-align:center;">Reload Index</div></div></div>
<div class="a" style="left:1171px;top:125px;width:19px;height:256px;background:repeating-conic-gradient(#ffffff 0% 25%, #c4dec8 0% 50%) 0 0/2px 2px;"></div>
<div class="a" style="left:1171px;top:125px;width:19px;height:19px;background:#a3c8a7;"></div>
<div class="a" style="left:1171px;top:125px;width:19px;height:1px;background:#bcd9c0;"></div>
<div class="a" style="left:1171px;top:125px;width:1px;height:19px;background:#bcd9c0;"></div>
<div class="a" style="left:1172px;top:126px;width:16px;height:1px;background:#d6edd8;"></div>
<div class="a" style="left:1172px;top:126px;width:1px;height:16px;background:#d6edd8;"></div>
<div class="a" style="left:1171px;top:143px;width:19px;height:1px;background:#000;"></div>
<div class="a" style="left:1189px;top:125px;width:1px;height:19px;background:#000;"></div>
<div class="a" style="left:1172px;top:142px;width:17px;height:1px;background:#5e9a6e;"></div>
<div class="a" style="left:1188px;top:126px;width:1px;height:17px;background:#5e9a6e;"></div>
<svg style="left:1171px;top:125px" width="19" height="19"><path d="M4 12h9.5l-4.75-5z" fill="#000"/></svg>
<div class="a" style="left:1171px;top:144px;width:19px;height:200px;background:#a3c8a7;"></div>
<div class="a" style="left:1171px;top:144px;width:19px;height:1px;background:#bcd9c0;"></div>
<div class="a" style="left:1171px;top:144px;width:1px;height:200px;background:#bcd9c0;"></div>
<div class="a" style="left:1172px;top:145px;width:16px;height:1px;background:#d6edd8;"></div>
<div class="a" style="left:1172px;top:145px;width:1px;height:197px;background:#d6edd8;"></div>
<div class="a" style="left:1171px;top:343px;width:19px;height:1px;background:#000;"></div>
<div class="a" style="left:1189px;top:144px;width:1px;height:200px;background:#000;"></div>
<div class="a" style="left:1172px;top:342px;width:17px;height:1px;background:#5e9a6e;"></div>
<div class="a" style="left:1188px;top:145px;width:1px;height:198px;background:#5e9a6e;"></div>
<div class="a" style="left:1171px;top:361px;width:19px;height:19px;background:#a3c8a7;"></div>
<div class="a" style="left:1171px;top:361px;width:19px;height:1px;background:#bcd9c0;"></div>
<div class="a" style="left:1171px;top:361px;width:1px;height:19px;background:#bcd9c0;"></div>
<div class="a" style="left:1172px;top:362px;width:16px;height:1px;background:#d6edd8;"></div>
<div class="a" style="left:1172px;top:362px;width:1px;height:16px;background:#d6edd8;"></div>
<div class="a" style="left:1171px;top:379px;width:19px;height:1px;background:#000;"></div>
<div class="a" style="left:1189px;top:361px;width:1px;height:19px;background:#000;"></div>
<div class="a" style="left:1172px;top:378px;width:17px;height:1px;background:#5e9a6e;"></div>
<div class="a" style="left:1188px;top:362px;width:1px;height:17px;background:#5e9a6e;"></div>
<svg style="left:1171px;top:361px" width="19" height="19"><path d="M4 7h9.5l-4.75 5z" fill="#000"/></svg>
<div class="a" style="left:264px;top:381px;width:907px;height:18px;background:repeating-conic-gradient(#ffffff 0% 25%, #c4dec8 0% 50%) 0 0/2px 2px;"></div>
<div class="a" style="left:264px;top:381px;width:19px;height:18px;background:#a3c8a7;"></div>
<div class="a" style="left:264px;top:381px;width:19px;height:1px;background:#bcd9c0;"></div>
<div class="a" style="left:264px;top:381px;width:1px;height:18px;background:#bcd9c0;"></div>
<div class="a" style="left:265px;top:382px;width:16px;height:1px;background:#d6edd8;"></div>
<div class="a" style="left:265px;top:382px;width:1px;height:15px;background:#d6edd8;"></div>
<div class="a" style="left:264px;top:398px;width:19px;height:1px;background:#000;"></div>
<div class="a" style="left:282px;top:381px;width:1px;height:18px;background:#000;"></div>
<div class="a" style="left:265px;top:397px;width:17px;height:1px;background:#5e9a6e;"></div>
<div class="a" style="left:281px;top:382px;width:1px;height:16px;background:#5e9a6e;"></div>
<svg style="left:264px;top:381px" width="19" height="18"><path d="M12 4v9.5l-5-4.75z" fill="#000"/></svg>
<div class="a" style="left:283px;top:381px;width:849px;height:18px;background:#a3c8a7;"></div>
<div class="a" style="left:283px;top:381px;width:849px;height:1px;background:#bcd9c0;"></div>
<div class="a" style="left:283px;top:381px;width:1px;height:18px;background:#bcd9c0;"></div>
<div class="a" style="left:284px;top:382px;width:846px;height:1px;background:#d6edd8;"></div>
<div class="a" style="left:284px;top:382px;width:1px;height:15px;background:#d6edd8;"></div>
<div class="a" style="left:283px;top:398px;width:849px;height:1px;background:#000;"></div>
<div class="a" style="left:1131px;top:381px;width:1px;height:18px;background:#000;"></div>
<div class="a" style="left:284px;top:397px;width:847px;height:1px;background:#5e9a6e;"></div>
<div class="a" style="left:1130px;top:382px;width:1px;height:16px;background:#5e9a6e;"></div>
<div class="a" style="left:1152px;top:381px;width:19px;height:18px;background:#a3c8a7;"></div>
<div class="a" style="left:1152px;top:381px;width:19px;height:1px;background:#bcd9c0;"></div>
<div class="a" style="left:1152px;top:381px;width:1px;height:18px;background:#bcd9c0;"></div>
<div class="a" style="left:1153px;top:382px;width:16px;height:1px;background:#d6edd8;"></div>
<div class="a" style="left:1153px;top:382px;width:1px;height:15px;background:#d6edd8;"></div>
<div class="a" style="left:1152px;top:398px;width:19px;height:1px;background:#000;"></div>
<div class="a" style="left:1170px;top:381px;width:1px;height:18px;background:#000;"></div>
<div class="a" style="left:1153px;top:397px;width:17px;height:1px;background:#5e9a6e;"></div>
<div class="a" style="left:1169px;top:382px;width:1px;height:16px;background:#5e9a6e;"></div>
<svg style="left:1152px;top:381px" width="19" height="18"><path d="M7 4v9.5l5-4.75z" fill="#000"/></svg>
<div class="a" style="left:1171px;top:380px;width:20px;height:19px;background:#a3c8a7;"></div>
<div class="a" style="left:262px;top:411px;width:792px;height:2px;background:#5f7a64;"></div>
<div class="a" style="left:262px;top:411px;width:1px;height:311px;background:#6d8a72;"></div>
<div class="a" style="left:1053px;top:412px;width:2px;height:310px;background:#fff;"></div>
<div class="a" style="left:262px;top:720px;width:793px;height:2px;background:#fff;"></div>
<div class="a" style="left:262px;top:723px;width:932px;height:1px;background:#5e9a6e;"></div>
<div class="a" style="left:264px;top:413px;width:75px;height:21px;background:#a3c8a7;"></div>
<div class="a" style="left:264px;top:413px;width:74px;height:1px;background:#d6edd8;"></div>
<div class="a" style="left:264px;top:413px;width:1px;height:20px;background:#d6edd8;"></div>
<div class="a" style="left:264px;top:433px;width:75px;height:1px;background:#000;"></div>
<div class="a" style="left:338px;top:413px;width:1px;height:21px;background:#000;"></div>
<div class="a" style="left:337px;top:414px;width:1px;height:19px;background:#5e9a6e;"></div>
<div class="t" style="left:264px;top:415.84px;font-size:12px;letter-spacing:0.4px;color:#000;line-height:16px;width:75px;text-align:center;">ID</div>
<div class="a" style="left:339px;top:413px;width:75px;height:21px;background:#a3c8a7;"></div>
<div class="a" style="left:339px;top:413px;width:74px;height:1px;background:#d6edd8;"></div>
<div class="a" style="left:339px;top:413px;width:1px;height:20px;background:#d6edd8;"></div>
<div class="a" style="left:339px;top:433px;width:75px;height:1px;background:#000;"></div>
<div class="a" style="left:413px;top:413px;width:1px;height:21px;background:#000;"></div>
<div class="a" style="left:412px;top:414px;width:1px;height:19px;background:#5e9a6e;"></div>
<div class="t" style="left:339px;top:415.84px;font-size:12px;letter-spacing:0.4px;color:#000;line-height:16px;width:75px;text-align:center;">rhum</div>
<div class="a" style="left:264px;top:434px;width:150px;height:286px;background:#fff;"></div>
<div class="a" style="left:264px;top:449px;width:150px;height:1px;background:#a0a0a0;"></div>
<div class="t" style="left:265px;top:434.14px;font-size:12px;letter-spacing:0.4px;color:#000;line-height:16px;">1.0</div>
<div class="t" style="left:340px;top:434.14px;font-size:12px;letter-spacing:0.4px;color:#000;line-height:16px;">94.252482...</div>
<div class="a" style="left:264px;top:465px;width:150px;height:1px;background:#a0a0a0;"></div>
<div class="t" style="left:265px;top:450.14px;font-size:12px;letter-spacing:0.4px;color:#000;line-height:16px;">2.0</div>
<div class="t" style="left:340px;top:450.14px;font-size:12px;letter-spacing:0.4px;color:#000;line-height:16px;">93.576176...</div>
<div class="a" style="left:264px;top:481px;width:150px;height:1px;background:#a0a0a0;"></div>
<div class="t" style="left:265px;top:466.14px;font-size:12px;letter-spacing:0.4px;color:#000;line-height:16px;">3.0</div>
<div class="t" style="left:340px;top:466.14px;font-size:12px;letter-spacing:0.4px;color:#000;line-height:16px;">93.766809...</div>
<div class="a" style="left:264px;top:497px;width:150px;height:1px;background:#a0a0a0;"></div>
<div class="t" style="left:265px;top:482.14px;font-size:12px;letter-spacing:0.4px;color:#000;line-height:16px;">4.0</div>
<div class="t" style="left:340px;top:482.14px;font-size:12px;letter-spacing:0.4px;color:#000;line-height:16px;">94.564679...</div>
<div class="a" style="left:264px;top:513px;width:150px;height:1px;background:#a0a0a0;"></div>
<div class="t" style="left:265px;top:498.14px;font-size:12px;letter-spacing:0.4px;color:#000;line-height:16px;">5.0</div>
<div class="t" style="left:340px;top:498.14px;font-size:12px;letter-spacing:0.4px;color:#000;line-height:16px;">93.421686...</div>
<div class="a" style="left:264px;top:529px;width:150px;height:1px;background:#a0a0a0;"></div>
<div class="t" style="left:265px;top:514.14px;font-size:12px;letter-spacing:0.4px;color:#000;line-height:16px;">6.0</div>
<div class="t" style="left:340px;top:514.14px;font-size:12px;letter-spacing:0.4px;color:#000;line-height:16px;">93.141936...</div>
<div class="a" style="left:264px;top:545px;width:150px;height:1px;background:#a0a0a0;"></div>
<div class="t" style="left:265px;top:530.14px;font-size:12px;letter-spacing:0.4px;color:#000;line-height:16px;">7.0</div>
<div class="t" style="left:340px;top:530.14px;font-size:12px;letter-spacing:0.4px;color:#000;line-height:16px;">93.863685...</div>
<div class="a" style="left:264px;top:561px;width:150px;height:1px;background:#a0a0a0;"></div>
<div class="t" style="left:265px;top:546.14px;font-size:12px;letter-spacing:0.4px;color:#000;line-height:16px;">8.0</div>
<div class="t" style="left:340px;top:546.14px;font-size:12px;letter-spacing:0.4px;color:#000;line-height:16px;">94.189339...</div>
<div class="a" style="left:264px;top:577px;width:150px;height:1px;background:#a0a0a0;"></div>
<div class="t" style="left:265px;top:562.14px;font-size:12px;letter-spacing:0.4px;color:#000;line-height:16px;">9.0</div>
<div class="t" style="left:340px;top:562.14px;font-size:12px;letter-spacing:0.4px;color:#000;line-height:16px;">93.001527...</div>
<div class="a" style="left:264px;top:593px;width:150px;height:1px;background:#a0a0a0;"></div>
<div class="t" style="left:265px;top:578.14px;font-size:12px;letter-spacing:0.4px;color:#000;line-height:16px;">10.0</div>
<div class="t" style="left:340px;top:578.14px;font-size:12px;letter-spacing:0.4px;color:#000;line-height:16px;">93.575038...</div>
<div class="a" style="left:264px;top:609px;width:150px;height:1px;background:#a0a0a0;"></div>
<div class="t" style="left:265px;top:594.14px;font-size:12px;letter-spacing:0.4px;color:#000;line-height:16px;">11.0</div>
<div class="t" style="left:340px;top:594.14px;font-size:12px;letter-spacing:0.4px;color:#000;line-height:16px;">92.993792...</div>
<div class="a" style="left:264px;top:625px;width:150px;height:1px;background:#a0a0a0;"></div>
<div class="t" style="left:265px;top:610.14px;font-size:12px;letter-spacing:0.4px;color:#000;line-height:16px;">12.0</div>
<div class="t" style="left:340px;top:610.14px;font-size:12px;letter-spacing:0.4px;color:#000;line-height:16px;">92.707811...</div>
<div class="a" style="left:264px;top:641px;width:150px;height:1px;background:#a0a0a0;"></div>
<div class="t" style="left:265px;top:626.14px;font-size:12px;letter-spacing:0.4px;color:#000;line-height:16px;">13.0</div>
<div class="t" style="left:340px;top:626.14px;font-size:12px;letter-spacing:0.4px;color:#000;line-height:16px;">92.346755...</div>
<div class="a" style="left:264px;top:657px;width:150px;height:1px;background:#a0a0a0;"></div>
<div class="t" style="left:265px;top:642.14px;font-size:12px;letter-spacing:0.4px;color:#000;line-height:16px;">14.0</div>
<div class="t" style="left:340px;top:642.14px;font-size:12px;letter-spacing:0.4px;color:#000;line-height:16px;">92.682593...</div>
<div class="a" style="left:264px;top:673px;width:150px;height:1px;background:#a0a0a0;"></div>
<div class="t" style="left:265px;top:658.14px;font-size:12px;letter-spacing:0.4px;color:#000;line-height:16px;">15.0</div>
<div class="t" style="left:340px;top:658.14px;font-size:12px;letter-spacing:0.4px;color:#000;line-height:16px;">95.129047...</div>
<div class="a" style="left:264px;top:689px;width:150px;height:1px;background:#a0a0a0;"></div>
<div class="t" style="left:265px;top:674.14px;font-size:12px;letter-spacing:0.4px;color:#000;line-height:16px;">16.0</div>
<div class="t" style="left:340px;top:674.14px;font-size:12px;letter-spacing:0.4px;color:#000;line-height:16px;">94.512815...</div>
<div class="a" style="left:264px;top:705px;width:150px;height:1px;background:#a0a0a0;"></div>
<div class="t" style="left:265px;top:690.14px;font-size:12px;letter-spacing:0.4px;color:#000;line-height:16px;">17.0</div>
<div class="t" style="left:340px;top:690.14px;font-size:12px;letter-spacing:0.4px;color:#000;line-height:16px;">92.637692...</div>
<div class="t" style="left:265px;top:706.14px;font-size:12px;letter-spacing:0.4px;color:#000;line-height:16px;">18.0</div>
<div class="t" style="left:340px;top:706.14px;font-size:12px;letter-spacing:0.4px;color:#000;line-height:16px;">92.779866...</div>
<div class="a" style="left:338px;top:434px;width:1px;height:286px;background:#a0a0a0;"></div>
<div class="a" style="left:413px;top:434px;width:1px;height:286px;background:#a0a0a0;"></div>
<div class="a" style="left:262px;top:720px;width:793px;height:2px;background:#fff;"></div>
<div class="a" style="left:1034px;top:461px;width:19px;height:241px;background:repeating-conic-gradient(#ffffff 0% 25%, #c4dec8 0% 50%) 0 0/2px 2px;"></div>
<div class="a" style="left:1035px;top:435px;width:18px;height:18px;background:#a3c8a7;"></div>
<div class="a" style="left:1035px;top:435px;width:18px;height:1px;background:#bcd9c0;"></div>
<div class="a" style="left:1035px;top:435px;width:1px;height:18px;background:#bcd9c0;"></div>
<div class="a" style="left:1036px;top:436px;width:15px;height:1px;background:#d6edd8;"></div>
<div class="a" style="left:1036px;top:436px;width:1px;height:15px;background:#d6edd8;"></div>
<div class="a" style="left:1035px;top:452px;width:18px;height:1px;background:#000;"></div>
<div class="a" style="left:1052px;top:435px;width:1px;height:18px;background:#000;"></div>
<div class="a" style="left:1036px;top:451px;width:16px;height:1px;background:#5e9a6e;"></div>
<div class="a" style="left:1051px;top:436px;width:1px;height:16px;background:#5e9a6e;"></div>
<svg style="left:1035px;top:435px" width="18" height="18"><path d="M3 10.5h9l-4.5-4.5z" fill="#000"/></svg>
<div class="a" style="left:1035px;top:453px;width:18px;height:8px;background:#a3c8a7;"></div>
<div class="a" style="left:1035px;top:453px;width:18px;height:1px;background:#bcd9c0;"></div>
<div class="a" style="left:1035px;top:453px;width:1px;height:8px;background:#bcd9c0;"></div>
<div class="a" style="left:1036px;top:454px;width:15px;height:1px;background:#d6edd8;"></div>
<div class="a" style="left:1036px;top:454px;width:1px;height:5px;background:#d6edd8;"></div>
<div class="a" style="left:1035px;top:460px;width:18px;height:1px;background:#000;"></div>
<div class="a" style="left:1052px;top:453px;width:1px;height:8px;background:#000;"></div>
<div class="a" style="left:1036px;top:459px;width:16px;height:1px;background:#5e9a6e;"></div>
<div class="a" style="left:1051px;top:454px;width:1px;height:6px;background:#5e9a6e;"></div>
<div class="a" style="left:1035px;top:702px;width:18px;height:18px;background:#a3c8a7;"></div>
<div class="a" style="left:1035px;top:702px;width:18px;height:1px;background:#bcd9c0;"></div>
<div class="a" style="left:1035px;top:702px;width:1px;height:18px;background:#bcd9c0;"></div>
<div class="a" style="left:1036px;top:703px;width:15px;height:1px;background:#d6edd8;"></div>
<div class="a" style="left:1036px;top:703px;width:1px;height:15px;background:#d6edd8;"></div>
<div class="a" style="left:1035px;top:719px;width:18px;height:1px;background:#000;"></div>
<div class="a" style="left:1052px;top:702px;width:1px;height:18px;background:#000;"></div>
<div class="a" style="left:1036px;top:718px;width:16px;height:1px;background:#5e9a6e;"></div>
<div class="a" style="left:1051px;top:703px;width:1px;height:16px;background:#5e9a6e;"></div>
<svg style="left:1035px;top:702px" width="18" height="18"><path d="M3 7h9l-4.5 4.5z" fill="#000"/></svg>
<div class="a" style="left:1072px;top:418px;width:113px;height:25px;background:#a3c8a7;"></div>
<div class="a" style="left:1072px;top:418px;width:112px;height:1px;background:#d6edd8;"></div>
<div class="a" style="left:1072px;top:418px;width:1px;height:24px;background:#d6edd8;"></div>
<div class="a" style="left:1072px;top:442px;width:113px;height:1px;background:#000;"></div>
<div class="a" style="left:1184px;top:418px;width:1px;height:25px;background:#000;"></div>
<div class="a" style="left:1073px;top:441px;width:111px;height:1px;background:#5e9a6e;"></div>
<div class="a" style="left:1183px;top:419px;width:1px;height:23px;background:#5e9a6e;"></div>
<div class="t" style="left:1072px;top:422.84px;font-size:12px;letter-spacing:0.4px;color:#000;line-height:16px;width:113px;text-align:center;">Close Tab</div>
<div class="a" style="left:1072px;top:447px;width:113px;height:25px;background:#a3c8a7;"></div>
<div class="a" style="left:1072px;top:447px;width:112px;height:1px;background:#d6edd8;"></div>
<div class="a" style="left:1072px;top:447px;width:1px;height:24px;background:#d6edd8;"></div>
<div class="a" style="left:1072px;top:471px;width:113px;height:1px;background:#000;"></div>
<div class="a" style="left:1184px;top:447px;width:1px;height:25px;background:#000;"></div>
<div class="a" style="left:1073px;top:470px;width:111px;height:1px;background:#5e9a6e;"></div>
<div class="a" style="left:1183px;top:448px;width:1px;height:23px;background:#5e9a6e;"></div>
<div class="t" style="left:1072px;top:451.84px;font-size:12px;letter-spacing:0.4px;color:#000;line-height:16px;width:113px;text-align:center;">Time Plot</div>
<div class="a" style="left:1072px;top:476px;width:113px;height:25px;background:#a3c8a7;"></div>
<div class="a" style="left:1072px;top:476px;width:112px;height:1px;background:#d6edd8;"></div>
<div class="a" style="left:1072px;top:476px;width:1px;height:24px;background:#d6edd8;"></div>
<div class="a" style="left:1072px;top:500px;width:113px;height:1px;background:#000;"></div>
<div class="a" style="left:1184px;top:476px;width:1px;height:25px;background:#000;"></div>
<div class="a" style="left:1073px;top:499px;width:111px;height:1px;background:#5e9a6e;"></div>
<div class="a" style="left:1183px;top:477px;width:1px;height:23px;background:#5e9a6e;"></div>
<div class="t" style="left:1072px;top:480.84px;font-size:12px;letter-spacing:0.4px;color:#000;line-height:16px;width:113px;text-align:center;">Data Plot</div>
<div class="a" style="left:1072px;top:534px;width:113px;height:25px;background:#a3c8a7;"></div>
<div class="a" style="left:1072px;top:534px;width:112px;height:1px;background:#d6edd8;"></div>
<div class="a" style="left:1072px;top:534px;width:1px;height:24px;background:#d6edd8;"></div>
<div class="a" style="left:1072px;top:558px;width:113px;height:1px;background:#000;"></div>
<div class="a" style="left:1184px;top:534px;width:1px;height:25px;background:#000;"></div>
<div class="a" style="left:1073px;top:557px;width:111px;height:1px;background:#5e9a6e;"></div>
<div class="a" style="left:1183px;top:535px;width:1px;height:23px;background:#5e9a6e;"></div>
<div class="t" style="left:1072px;top:538.84px;font-size:12px;letter-spacing:0.4px;color:#000;line-height:16px;width:113px;text-align:center;">Save Data</div>
<div class="a" style="left:1072px;top:563px;width:113px;height:25px;background:#a3c8a7;"></div>
<div class="a" style="left:1072px;top:563px;width:112px;height:1px;background:#d6edd8;"></div>
<div class="a" style="left:1072px;top:563px;width:1px;height:24px;background:#d6edd8;"></div>
<div class="a" style="left:1072px;top:587px;width:113px;height:1px;background:#000;"></div>
<div class="a" style="left:1184px;top:563px;width:1px;height:25px;background:#000;"></div>
<div class="a" style="left:1073px;top:586px;width:111px;height:1px;background:#5e9a6e;"></div>
<div class="a" style="left:1183px;top:564px;width:1px;height:23px;background:#5e9a6e;"></div>
<div class="t" style="left:1072px;top:567.84px;font-size:12px;letter-spacing:0.4px;color:#000;line-height:16px;width:113px;text-align:center;">Statistics</div>
<div class="a" style="left:1072px;top:592px;width:113px;height:25px;background:#a3c8a7;"></div>
<div class="a" style="left:1072px;top:592px;width:112px;height:1px;background:#d6edd8;"></div>
<div class="a" style="left:1072px;top:592px;width:1px;height:24px;background:#d6edd8;"></div>
<div class="a" style="left:1072px;top:616px;width:113px;height:1px;background:#000;"></div>
<div class="a" style="left:1184px;top:592px;width:1px;height:25px;background:#000;"></div>
<div class="a" style="left:1073px;top:615px;width:111px;height:1px;background:#5e9a6e;"></div>
<div class="a" style="left:1183px;top:593px;width:1px;height:23px;background:#5e9a6e;"></div>
<div class="t" style="left:1072px;top:596.84px;font-size:12px;letter-spacing:0.4px;color:#000;line-height:16px;width:113px;text-align:center;">Show on map</div>
<div class="a" style="left:1076px;top:511px;width:13px;height:13px;background:#fff;"></div>
<div class="a" style="left:1076px;top:511px;width:13px;height:1px;background:#5e9a6e;"></div>
<div class="a" style="left:1076px;top:511px;width:1px;height:13px;background:#5e9a6e;"></div>
<div class="a" style="left:1077px;top:512px;width:11px;height:1px;background:#000;"></div>
<div class="a" style="left:1077px;top:512px;width:1px;height:11px;background:#000;"></div>
<div class="a" style="left:1076px;top:523px;width:13px;height:1px;background:#d6edd8;"></div>
<div class="a" style="left:1088px;top:511px;width:1px;height:13px;background:#d6edd8;"></div>
<div class="t" style="left:1092px;top:509.84px;font-size:12px;letter-spacing:0.4px;color:#000;line-height:16px;">use Template</div>
<div class="a" style="left:1072px;top:621px;width:113px;height:23px;background:#fff;"></div>
<div class="a" style="left:1072px;top:621px;width:113px;height:1px;background:#5e9a6e;"></div>
<div class="a" style="left:1072px;top:621px;width:1px;height:23px;background:#5e9a6e;"></div>
<div class="a" style="left:1073px;top:622px;width:111px;height:1px;background:#000;"></div>
<div class="a" style="left:1073px;top:622px;width:1px;height:21px;background:#000;"></div>
<div class="a" style="left:1072px;top:643px;width:113px;height:1px;background:#d6edd8;"></div>
<div class="a" style="left:1184px;top:621px;width:1px;height:23px;background:#d6edd8;"></div>
<div class="a" style="left:1163px;top:623px;width:20px;height:19px;background:#a3c8a7;"></div>
<div class="a" style="left:1163px;top:623px;width:20px;height:1px;background:#d6edd8;"></div>
<div class="a" style="left:1163px;top:623px;width:1px;height:19px;background:#d6edd8;"></div>
<div class="a" style="left:1163px;top:641px;width:20px;height:1px;background:#000;"></div>
<div class="a" style="left:1182px;top:623px;width:1px;height:19px;background:#000;"></div>
<div class="a" style="left:1164px;top:640px;width:18px;height:1px;background:#5e9a6e;"></div>
<div class="a" style="left:1181px;top:624px;width:1px;height:17px;background:#5e9a6e;"></div>
<svg style="left:1163px;top:623px" width="20" height="19"><path d="M5.5 7.5h8l-4 4.5z" fill="#000"/></svg>
<div class="t" style="left:1076px;top:625.84px;font-size:12px;letter-spacing:0.35px;color:#000;line-height:16px;">hrus</div>
<div class="a" style="left:4px;top:726px;width:1192px;height:1px;background:#6d8a72;"></div>
<div class="a" style="left:4px;top:726px;width:1px;height:20px;background:#6d8a72;"></div>
<div class="a" style="left:5px;top:727px;width:1190px;height:1px;background:#d6edd8;"></div>
<div class="a" style="left:5px;top:727px;width:1px;height:18px;background:#d6edd8;"></div>
<div class="a" style="left:5px;top:744px;width:1190px;height:1px;background:#6d8a72;"></div>
<div class="a" style="left:1194px;top:727px;width:1px;height:18px;background:#6d8a72;"></div>
<div class="a" style="left:4px;top:745px;width:1192px;height:1px;background:#d6edd8;"></div>
<div class="a" style="left:1195px;top:726px;width:1px;height:20px;background:#d6edd8;"></div>
<div class="t" style="left:6px;top:728.84px;font-size:12px;letter-spacing:0.1px;color:#000;line-height:16px;">JAMS Data Explorer</div>
</body></html>
